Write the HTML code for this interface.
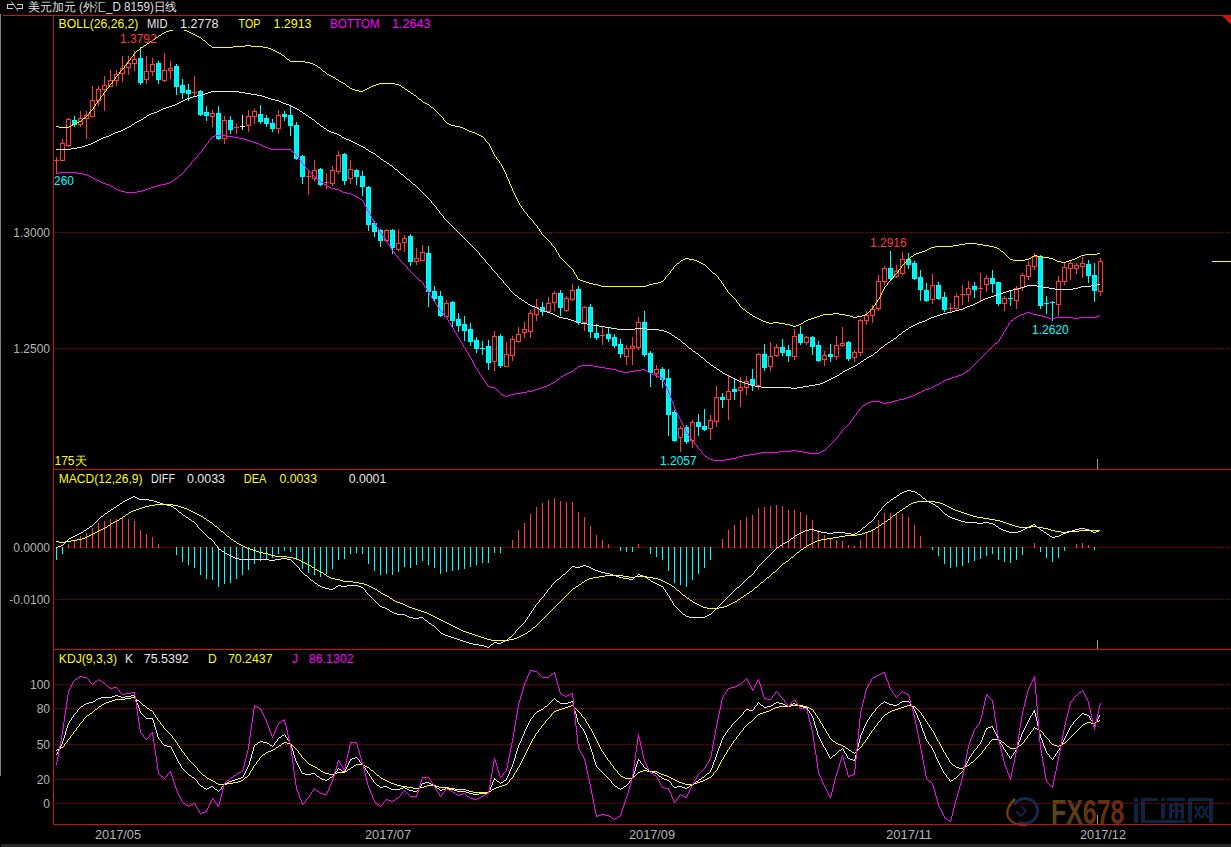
<!DOCTYPE html><html><head><meta charset="utf-8"><style>
html,body{margin:0;padding:0;background:#000;width:1231px;height:847px;overflow:hidden}
svg{display:block}
text{font-family:"Liberation Sans",sans-serif;font-size:12px}
</style></head><body>
<svg width="1231" height="847" viewBox="0 0 1231 847">
<rect width="1231" height="847" fill="#000"/>
<defs><linearGradient id="fxg" x1="0" y1="0" x2="1" y2="0"><stop offset="0" stop-color="#584616"/><stop offset="0.45" stop-color="#5e3816"/><stop offset="1" stop-color="#662a10"/></linearGradient><linearGradient id="crs" x1="0" y1="0" x2="0" y2="1"><stop offset="0" stop-color="#6a5010"/><stop offset="0.6" stop-color="#7a3010"/><stop offset="1" stop-color="#6a3818"/></linearGradient></defs>
<g>
<path d="M1014.2 804.75 A12.5 12.5 0 1 1 1018.75 821.8" fill="none" stroke="#132a50" stroke-width="3"/>
<path d="M1015 799 Q1005 808 1008 817 Q1013 826 1027 825" fill="none" stroke="url(#crs)" stroke-width="2.4"/>
<path d="M1021 806 L1026 811 L1021 816 L1016 811" fill="none" stroke="#132a50" stroke-width="1.6"/>
<text x="1051" y="823.5" style="font-size:34.5px;font-weight:bold" fill="url(#fxg)" textLength="73.5" lengthAdjust="spacingAndGlyphs">FX678</text>
<g fill="#0e2242" shape-rendering="crispEdges"><rect x="1134" y="798" width="4" height="4"/><rect x="1134" y="804" width="4" height="19"/><rect x="1141" y="798" width="17" height="3"/><rect x="1141" y="798" width="4" height="25"/><rect x="1141" y="820" width="44" height="3"/><rect x="1161" y="798" width="4" height="3"/><rect x="1161" y="804" width="4" height="15"/><rect x="1167" y="798" width="18" height="3"/><rect x="1169" y="804" width="15" height="2"/><rect x="1169" y="804" width="3" height="15"/><rect x="1181" y="804" width="3" height="15"/><rect x="1175" y="802" width="3" height="17"/><rect x="1169" y="810" width="15" height="2"/><rect x="1188" y="798" width="25" height="3"/><rect x="1188" y="798" width="4" height="25"/><rect x="1209" y="798" width="4" height="25"/></g>
<path d="M1195 806 L1201 818 M1201 806 L1195 818 M1202 806 L1208 818 M1208 806 L1202 818" stroke="#0e2242" stroke-width="2.2" fill="none"/>
</g>
<g stroke="#a00000" stroke-width="1" stroke-dasharray="1 1" shape-rendering="crispEdges">
<line x1="55" y1="232.5" x2="1231" y2="232.5"/>
<line x1="55" y1="348.5" x2="1231" y2="348.5"/>
<line x1="55" y1="547.5" x2="1231" y2="547.5"/>
<line x1="55" y1="599.5" x2="1231" y2="599.5"/>
<line x1="55" y1="684.5" x2="1231" y2="684.5"/>
<line x1="55" y1="708.5" x2="1231" y2="708.5"/>
<line x1="55" y1="744.5" x2="1231" y2="744.5"/>
<line x1="55" y1="779.5" x2="1231" y2="779.5"/>
<line x1="55" y1="803.5" x2="1231" y2="803.5"/>
</g>
<g fill="#c8140a" shape-rendering="crispEdges">
<rect x="3" y="15" width="1228" height="1"/>
<rect x="53" y="15" width="1" height="810"/>
<rect x="53" y="469" width="1178" height="1"/>
<rect x="53" y="649" width="1178" height="1"/>
<rect x="53" y="824" width="1178" height="1"/>
<path d="M1222 15 L1231 15 L1231 25 Z"/>
</g>
<rect x="0" y="14" width="1" height="762" fill="#808080" shape-rendering="crispEdges"/>
<rect x="1" y="844" width="1230" height="3" fill="#2a2a2a" shape-rendering="crispEdges"/>
<g fill="#a0a0a0" shape-rendering="crispEdges">
<rect x="1097" y="459" width="1" height="10"/>
<rect x="1097" y="640" width="1" height="9"/>
<rect x="1097" y="815" width="1" height="9"/>
</g>
<rect x="1212" y="261" width="19" height="1" fill="#ffff00" shape-rendering="crispEdges"/>
<g shape-rendering="crispEdges">
<rect x="56" y="547" width="1" height="13" fill="#00ffff"/>
<rect x="62" y="547" width="1" height="7" fill="#00ffff"/>
<rect x="68" y="544" width="1" height="4" fill="#ff3c3c"/>
<rect x="74" y="540" width="1" height="8" fill="#ff3c3c"/>
<rect x="80" y="536" width="1" height="12" fill="#ff3c3c"/>
<rect x="86" y="533" width="1" height="15" fill="#ff3c3c"/>
<rect x="92" y="528" width="1" height="20" fill="#ff3c3c"/>
<rect x="98" y="523" width="1" height="25" fill="#ff3c3c"/>
<rect x="104" y="521" width="1" height="27" fill="#ff3c3c"/>
<rect x="110" y="519" width="1" height="29" fill="#ff3c3c"/>
<rect x="116" y="519" width="1" height="29" fill="#ff3c3c"/>
<rect x="122" y="518" width="1" height="30" fill="#ff3c3c"/>
<rect x="128" y="519" width="1" height="29" fill="#ff3c3c"/>
<rect x="134" y="521" width="1" height="27" fill="#ff3c3c"/>
<rect x="140" y="530" width="1" height="18" fill="#ff3c3c"/>
<rect x="146" y="534" width="1" height="14" fill="#ff3c3c"/>
<rect x="152" y="537" width="1" height="11" fill="#ff3c3c"/>
<rect x="158" y="544" width="1" height="4" fill="#ff3c3c"/>
<rect x="176" y="547" width="1" height="8" fill="#00ffff"/>
<rect x="182" y="547" width="1" height="15" fill="#00ffff"/>
<rect x="188" y="547" width="1" height="18" fill="#00ffff"/>
<rect x="194" y="547" width="1" height="21" fill="#00ffff"/>
<rect x="200" y="547" width="1" height="28" fill="#00ffff"/>
<rect x="206" y="547" width="1" height="32" fill="#00ffff"/>
<rect x="212" y="547" width="1" height="33" fill="#00ffff"/>
<rect x="218" y="547" width="1" height="40" fill="#00ffff"/>
<rect x="224" y="547" width="1" height="37" fill="#00ffff"/>
<rect x="230" y="547" width="1" height="36" fill="#00ffff"/>
<rect x="236" y="547" width="1" height="32" fill="#00ffff"/>
<rect x="242" y="547" width="1" height="28" fill="#00ffff"/>
<rect x="248" y="547" width="1" height="23" fill="#00ffff"/>
<rect x="254" y="547" width="1" height="17" fill="#00ffff"/>
<rect x="260" y="547" width="1" height="14" fill="#00ffff"/>
<rect x="266" y="547" width="1" height="12" fill="#00ffff"/>
<rect x="272" y="547" width="1" height="11" fill="#00ffff"/>
<rect x="278" y="547" width="1" height="7" fill="#00ffff"/>
<rect x="284" y="547" width="1" height="4" fill="#00ffff"/>
<rect x="290" y="547" width="1" height="5" fill="#00ffff"/>
<rect x="296" y="547" width="1" height="13" fill="#00ffff"/>
<rect x="302" y="547" width="1" height="22" fill="#00ffff"/>
<rect x="308" y="547" width="1" height="26" fill="#00ffff"/>
<rect x="314" y="547" width="1" height="28" fill="#00ffff"/>
<rect x="320" y="547" width="1" height="30" fill="#00ffff"/>
<rect x="326" y="547" width="1" height="27" fill="#00ffff"/>
<rect x="332" y="547" width="1" height="22" fill="#00ffff"/>
<rect x="338" y="547" width="1" height="13" fill="#00ffff"/>
<rect x="344" y="547" width="1" height="12" fill="#00ffff"/>
<rect x="350" y="547" width="1" height="7" fill="#00ffff"/>
<rect x="356" y="547" width="1" height="6" fill="#00ffff"/>
<rect x="362" y="547" width="1" height="7" fill="#00ffff"/>
<rect x="368" y="547" width="1" height="17" fill="#00ffff"/>
<rect x="374" y="547" width="1" height="24" fill="#00ffff"/>
<rect x="380" y="547" width="1" height="28" fill="#00ffff"/>
<rect x="386" y="547" width="1" height="27" fill="#00ffff"/>
<rect x="392" y="547" width="1" height="28" fill="#00ffff"/>
<rect x="398" y="547" width="1" height="25" fill="#00ffff"/>
<rect x="404" y="547" width="1" height="20" fill="#00ffff"/>
<rect x="410" y="547" width="1" height="21" fill="#00ffff"/>
<rect x="416" y="547" width="1" height="18" fill="#00ffff"/>
<rect x="422" y="547" width="1" height="14" fill="#00ffff"/>
<rect x="428" y="547" width="1" height="18" fill="#00ffff"/>
<rect x="434" y="547" width="1" height="21" fill="#00ffff"/>
<rect x="440" y="547" width="1" height="27" fill="#00ffff"/>
<rect x="446" y="547" width="1" height="25" fill="#00ffff"/>
<rect x="452" y="547" width="1" height="24" fill="#00ffff"/>
<rect x="458" y="547" width="1" height="23" fill="#00ffff"/>
<rect x="464" y="547" width="1" height="22" fill="#00ffff"/>
<rect x="470" y="547" width="1" height="20" fill="#00ffff"/>
<rect x="476" y="547" width="1" height="18" fill="#00ffff"/>
<rect x="482" y="547" width="1" height="16" fill="#00ffff"/>
<rect x="488" y="547" width="1" height="16" fill="#00ffff"/>
<rect x="494" y="547" width="1" height="6" fill="#00ffff"/>
<rect x="500" y="547" width="1" height="6" fill="#00ffff"/>
<rect x="512" y="540" width="1" height="8" fill="#ff3c3c"/>
<rect x="518" y="530" width="1" height="18" fill="#ff3c3c"/>
<rect x="524" y="523" width="1" height="25" fill="#ff3c3c"/>
<rect x="530" y="514" width="1" height="34" fill="#ff3c3c"/>
<rect x="536" y="507" width="1" height="41" fill="#ff3c3c"/>
<rect x="542" y="503" width="1" height="45" fill="#ff3c3c"/>
<rect x="548" y="500" width="1" height="48" fill="#ff3c3c"/>
<rect x="554" y="498" width="1" height="50" fill="#ff3c3c"/>
<rect x="560" y="501" width="1" height="47" fill="#ff3c3c"/>
<rect x="566" y="502" width="1" height="46" fill="#ff3c3c"/>
<rect x="572" y="502" width="1" height="46" fill="#ff3c3c"/>
<rect x="578" y="512" width="1" height="36" fill="#ff3c3c"/>
<rect x="584" y="517" width="1" height="31" fill="#ff3c3c"/>
<rect x="590" y="526" width="1" height="22" fill="#ff3c3c"/>
<rect x="596" y="535" width="1" height="13" fill="#ff3c3c"/>
<rect x="602" y="540" width="1" height="8" fill="#ff3c3c"/>
<rect x="608" y="544" width="1" height="4" fill="#ff3c3c"/>
<rect x="620" y="547" width="1" height="4" fill="#00ffff"/>
<rect x="626" y="547" width="1" height="5" fill="#00ffff"/>
<rect x="632" y="547" width="1" height="5" fill="#00ffff"/>
<rect x="638" y="544" width="1" height="4" fill="#ff3c3c"/>
<rect x="650" y="547" width="1" height="7" fill="#00ffff"/>
<rect x="656" y="547" width="1" height="10" fill="#00ffff"/>
<rect x="662" y="547" width="1" height="13" fill="#00ffff"/>
<rect x="668" y="547" width="1" height="24" fill="#00ffff"/>
<rect x="674" y="547" width="1" height="36" fill="#00ffff"/>
<rect x="680" y="547" width="1" height="38" fill="#00ffff"/>
<rect x="686" y="547" width="1" height="40" fill="#00ffff"/>
<rect x="692" y="547" width="1" height="33" fill="#00ffff"/>
<rect x="698" y="547" width="1" height="27" fill="#00ffff"/>
<rect x="704" y="547" width="1" height="21" fill="#00ffff"/>
<rect x="710" y="547" width="1" height="13" fill="#00ffff"/>
<rect x="722" y="539" width="1" height="9" fill="#ff3c3c"/>
<rect x="728" y="530" width="1" height="18" fill="#ff3c3c"/>
<rect x="734" y="525" width="1" height="23" fill="#ff3c3c"/>
<rect x="740" y="520" width="1" height="28" fill="#ff3c3c"/>
<rect x="746" y="517" width="1" height="31" fill="#ff3c3c"/>
<rect x="752" y="515" width="1" height="33" fill="#ff3c3c"/>
<rect x="758" y="508" width="1" height="40" fill="#ff3c3c"/>
<rect x="764" y="507" width="1" height="41" fill="#ff3c3c"/>
<rect x="770" y="506" width="1" height="42" fill="#ff3c3c"/>
<rect x="776" y="505" width="1" height="43" fill="#ff3c3c"/>
<rect x="782" y="506" width="1" height="42" fill="#ff3c3c"/>
<rect x="788" y="510" width="1" height="38" fill="#ff3c3c"/>
<rect x="794" y="510" width="1" height="38" fill="#ff3c3c"/>
<rect x="800" y="512" width="1" height="36" fill="#ff3c3c"/>
<rect x="806" y="515" width="1" height="33" fill="#ff3c3c"/>
<rect x="812" y="520" width="1" height="28" fill="#ff3c3c"/>
<rect x="818" y="530" width="1" height="18" fill="#ff3c3c"/>
<rect x="824" y="535" width="1" height="13" fill="#ff3c3c"/>
<rect x="830" y="539" width="1" height="9" fill="#ff3c3c"/>
<rect x="836" y="540" width="1" height="8" fill="#ff3c3c"/>
<rect x="842" y="541" width="1" height="7" fill="#ff3c3c"/>
<rect x="848" y="545" width="1" height="3" fill="#ff3c3c"/>
<rect x="854" y="546" width="1" height="2" fill="#ff3c3c"/>
<rect x="860" y="540" width="1" height="8" fill="#ff3c3c"/>
<rect x="866" y="533" width="1" height="15" fill="#ff3c3c"/>
<rect x="872" y="529" width="1" height="19" fill="#ff3c3c"/>
<rect x="878" y="520" width="1" height="28" fill="#ff3c3c"/>
<rect x="884" y="513" width="1" height="35" fill="#ff3c3c"/>
<rect x="890" y="513" width="1" height="35" fill="#ff3c3c"/>
<rect x="896" y="514" width="1" height="34" fill="#ff3c3c"/>
<rect x="902" y="514" width="1" height="34" fill="#ff3c3c"/>
<rect x="908" y="517" width="1" height="31" fill="#ff3c3c"/>
<rect x="914" y="525" width="1" height="23" fill="#ff3c3c"/>
<rect x="920" y="536" width="1" height="12" fill="#ff3c3c"/>
<rect x="932" y="547" width="1" height="3" fill="#00ffff"/>
<rect x="938" y="547" width="1" height="9" fill="#00ffff"/>
<rect x="944" y="547" width="1" height="17" fill="#00ffff"/>
<rect x="950" y="547" width="1" height="21" fill="#00ffff"/>
<rect x="956" y="547" width="1" height="20" fill="#00ffff"/>
<rect x="962" y="547" width="1" height="19" fill="#00ffff"/>
<rect x="968" y="547" width="1" height="16" fill="#00ffff"/>
<rect x="974" y="547" width="1" height="14" fill="#00ffff"/>
<rect x="980" y="547" width="1" height="12" fill="#00ffff"/>
<rect x="986" y="547" width="1" height="9" fill="#00ffff"/>
<rect x="992" y="547" width="1" height="7" fill="#00ffff"/>
<rect x="998" y="547" width="1" height="13" fill="#00ffff"/>
<rect x="1004" y="547" width="1" height="15" fill="#00ffff"/>
<rect x="1010" y="547" width="1" height="16" fill="#00ffff"/>
<rect x="1016" y="547" width="1" height="13" fill="#00ffff"/>
<rect x="1022" y="547" width="1" height="8" fill="#00ffff"/>
<rect x="1034" y="543" width="1" height="5" fill="#ff3c3c"/>
<rect x="1040" y="547" width="1" height="5" fill="#00ffff"/>
<rect x="1046" y="547" width="1" height="11" fill="#00ffff"/>
<rect x="1052" y="547" width="1" height="15" fill="#00ffff"/>
<rect x="1058" y="547" width="1" height="11" fill="#00ffff"/>
<rect x="1064" y="547" width="1" height="4" fill="#00ffff"/>
<rect x="1076" y="544" width="1" height="4" fill="#ff3c3c"/>
<rect x="1082" y="543" width="1" height="5" fill="#ff3c3c"/>
<rect x="1088" y="545" width="1" height="3" fill="#ff3c3c"/>
<rect x="1094" y="547" width="1" height="3" fill="#00ffff"/>
</g>
<g shape-rendering="crispEdges">
<rect x="56" y="157" width="1" height="3" fill="#ff3c3c"/>
<rect x="56" y="161" width="1" height="12" fill="#ff3c3c"/>
<rect x="54" y="160" width="5" height="1" fill="#ff3c3c"/>
<rect x="62" y="139" width="1" height="4" fill="#ff3c3c"/>
<rect x="60" y="143" width="5" height="1" fill="#ff3c3c"/>
<rect x="60" y="160" width="5" height="1" fill="#ff3c3c"/>
<rect x="60" y="143" width="1" height="18" fill="#ff3c3c"/>
<rect x="64" y="143" width="1" height="18" fill="#ff3c3c"/>
<rect x="68" y="118" width="1" height="1" fill="#ff3c3c"/>
<rect x="68" y="146" width="1" height="1" fill="#ff3c3c"/>
<rect x="66" y="119" width="5" height="1" fill="#ff3c3c"/>
<rect x="66" y="145" width="5" height="1" fill="#ff3c3c"/>
<rect x="66" y="119" width="1" height="27" fill="#ff3c3c"/>
<rect x="70" y="119" width="1" height="27" fill="#ff3c3c"/>
<rect x="74" y="116" width="1" height="11" fill="#00ffff"/>
<rect x="72" y="120" width="5" height="5" fill="#00ffff"/>
<rect x="73" y="121" width="3" height="3" fill="#00f0f0"/>
<rect x="80" y="111" width="1" height="7" fill="#ff3c3c"/>
<rect x="80" y="125" width="1" height="2" fill="#ff3c3c"/>
<rect x="78" y="118" width="5" height="1" fill="#ff3c3c"/>
<rect x="78" y="124" width="5" height="1" fill="#ff3c3c"/>
<rect x="78" y="118" width="1" height="7" fill="#ff3c3c"/>
<rect x="82" y="118" width="1" height="7" fill="#ff3c3c"/>
<rect x="86" y="111" width="1" height="4" fill="#ff3c3c"/>
<rect x="86" y="119" width="1" height="20" fill="#ff3c3c"/>
<rect x="84" y="115" width="5" height="1" fill="#ff3c3c"/>
<rect x="84" y="118" width="5" height="1" fill="#ff3c3c"/>
<rect x="84" y="115" width="1" height="4" fill="#ff3c3c"/>
<rect x="88" y="115" width="1" height="4" fill="#ff3c3c"/>
<rect x="92" y="86" width="1" height="14" fill="#ff3c3c"/>
<rect x="90" y="100" width="5" height="1" fill="#ff3c3c"/>
<rect x="90" y="116" width="5" height="1" fill="#ff3c3c"/>
<rect x="90" y="100" width="1" height="17" fill="#ff3c3c"/>
<rect x="94" y="100" width="1" height="17" fill="#ff3c3c"/>
<rect x="98" y="86" width="1" height="3" fill="#ff3c3c"/>
<rect x="98" y="101" width="1" height="5" fill="#ff3c3c"/>
<rect x="96" y="89" width="5" height="1" fill="#ff3c3c"/>
<rect x="96" y="100" width="5" height="1" fill="#ff3c3c"/>
<rect x="96" y="89" width="1" height="12" fill="#ff3c3c"/>
<rect x="100" y="89" width="1" height="12" fill="#ff3c3c"/>
<rect x="104" y="76" width="1" height="9" fill="#ff3c3c"/>
<rect x="104" y="90" width="1" height="21" fill="#ff3c3c"/>
<rect x="102" y="85" width="5" height="1" fill="#ff3c3c"/>
<rect x="102" y="89" width="5" height="1" fill="#ff3c3c"/>
<rect x="102" y="85" width="1" height="5" fill="#ff3c3c"/>
<rect x="106" y="85" width="1" height="5" fill="#ff3c3c"/>
<rect x="110" y="70" width="1" height="10" fill="#ff3c3c"/>
<rect x="108" y="80" width="5" height="1" fill="#ff3c3c"/>
<rect x="108" y="86" width="5" height="1" fill="#ff3c3c"/>
<rect x="108" y="80" width="1" height="7" fill="#ff3c3c"/>
<rect x="112" y="80" width="1" height="7" fill="#ff3c3c"/>
<rect x="116" y="70" width="1" height="4" fill="#ff3c3c"/>
<rect x="116" y="81" width="1" height="5" fill="#ff3c3c"/>
<rect x="114" y="74" width="5" height="1" fill="#ff3c3c"/>
<rect x="114" y="80" width="5" height="1" fill="#ff3c3c"/>
<rect x="114" y="74" width="1" height="7" fill="#ff3c3c"/>
<rect x="118" y="74" width="1" height="7" fill="#ff3c3c"/>
<rect x="122" y="56" width="1" height="12" fill="#ff3c3c"/>
<rect x="122" y="74" width="1" height="8" fill="#ff3c3c"/>
<rect x="120" y="68" width="5" height="1" fill="#ff3c3c"/>
<rect x="120" y="73" width="5" height="1" fill="#ff3c3c"/>
<rect x="120" y="68" width="1" height="6" fill="#ff3c3c"/>
<rect x="124" y="68" width="1" height="6" fill="#ff3c3c"/>
<rect x="128" y="56" width="1" height="7" fill="#ff3c3c"/>
<rect x="128" y="68" width="1" height="7" fill="#ff3c3c"/>
<rect x="126" y="63" width="5" height="1" fill="#ff3c3c"/>
<rect x="126" y="67" width="5" height="1" fill="#ff3c3c"/>
<rect x="126" y="63" width="1" height="5" fill="#ff3c3c"/>
<rect x="130" y="63" width="1" height="5" fill="#ff3c3c"/>
<rect x="134" y="51" width="1" height="8" fill="#ff3c3c"/>
<rect x="134" y="64" width="1" height="7" fill="#ff3c3c"/>
<rect x="132" y="59" width="5" height="1" fill="#ff3c3c"/>
<rect x="132" y="63" width="5" height="1" fill="#ff3c3c"/>
<rect x="132" y="59" width="1" height="5" fill="#ff3c3c"/>
<rect x="136" y="59" width="1" height="5" fill="#ff3c3c"/>
<rect x="140" y="47" width="1" height="38" fill="#00ffff"/>
<rect x="138" y="58" width="5" height="25" fill="#00ffff"/>
<rect x="139" y="59" width="3" height="23" fill="#00f0f0"/>
<rect x="146" y="56" width="1" height="15" fill="#ff3c3c"/>
<rect x="146" y="80" width="1" height="4" fill="#ff3c3c"/>
<rect x="144" y="71" width="5" height="1" fill="#ff3c3c"/>
<rect x="144" y="79" width="5" height="1" fill="#ff3c3c"/>
<rect x="144" y="71" width="1" height="9" fill="#ff3c3c"/>
<rect x="148" y="71" width="1" height="9" fill="#ff3c3c"/>
<rect x="152" y="58" width="1" height="6" fill="#ff3c3c"/>
<rect x="152" y="72" width="1" height="4" fill="#ff3c3c"/>
<rect x="150" y="64" width="5" height="1" fill="#ff3c3c"/>
<rect x="150" y="71" width="5" height="1" fill="#ff3c3c"/>
<rect x="150" y="64" width="1" height="8" fill="#ff3c3c"/>
<rect x="154" y="64" width="1" height="8" fill="#ff3c3c"/>
<rect x="158" y="61" width="1" height="23" fill="#00ffff"/>
<rect x="156" y="63" width="5" height="17" fill="#00ffff"/>
<rect x="157" y="64" width="3" height="15" fill="#00f0f0"/>
<rect x="164" y="53" width="1" height="17" fill="#ff3c3c"/>
<rect x="164" y="81" width="1" height="1" fill="#ff3c3c"/>
<rect x="162" y="70" width="5" height="1" fill="#ff3c3c"/>
<rect x="162" y="80" width="5" height="1" fill="#ff3c3c"/>
<rect x="162" y="70" width="1" height="11" fill="#ff3c3c"/>
<rect x="166" y="70" width="1" height="11" fill="#ff3c3c"/>
<rect x="170" y="61" width="1" height="7" fill="#ff3c3c"/>
<rect x="170" y="71" width="1" height="8" fill="#ff3c3c"/>
<rect x="168" y="68" width="5" height="1" fill="#ff3c3c"/>
<rect x="168" y="70" width="5" height="1" fill="#ff3c3c"/>
<rect x="168" y="68" width="1" height="3" fill="#ff3c3c"/>
<rect x="172" y="68" width="1" height="3" fill="#ff3c3c"/>
<rect x="176" y="64" width="1" height="31" fill="#00ffff"/>
<rect x="174" y="66" width="5" height="21" fill="#00ffff"/>
<rect x="175" y="67" width="3" height="19" fill="#00f0f0"/>
<rect x="182" y="79" width="1" height="20" fill="#00ffff"/>
<rect x="180" y="85" width="5" height="8" fill="#00ffff"/>
<rect x="181" y="86" width="3" height="6" fill="#00f0f0"/>
<rect x="188" y="84" width="1" height="17" fill="#00ffff"/>
<rect x="186" y="90" width="5" height="4" fill="#00ffff"/>
<rect x="187" y="91" width="3" height="2" fill="#00f0f0"/>
<rect x="194" y="76" width="1" height="16" fill="#ff3c3c"/>
<rect x="194" y="93" width="1" height="4" fill="#ff3c3c"/>
<rect x="192" y="92" width="5" height="1" fill="#ff3c3c"/>
<rect x="200" y="90" width="1" height="26" fill="#00ffff"/>
<rect x="198" y="91" width="5" height="24" fill="#00ffff"/>
<rect x="199" y="92" width="3" height="22" fill="#00f0f0"/>
<rect x="206" y="106" width="1" height="15" fill="#00ffff"/>
<rect x="204" y="112" width="5" height="4" fill="#00ffff"/>
<rect x="205" y="113" width="3" height="2" fill="#00f0f0"/>
<rect x="212" y="110" width="1" height="3" fill="#ff3c3c"/>
<rect x="212" y="117" width="1" height="10" fill="#ff3c3c"/>
<rect x="210" y="113" width="5" height="1" fill="#ff3c3c"/>
<rect x="210" y="116" width="5" height="1" fill="#ff3c3c"/>
<rect x="210" y="113" width="1" height="4" fill="#ff3c3c"/>
<rect x="214" y="113" width="1" height="4" fill="#ff3c3c"/>
<rect x="218" y="106" width="1" height="34" fill="#00ffff"/>
<rect x="216" y="113" width="5" height="26" fill="#00ffff"/>
<rect x="217" y="114" width="3" height="24" fill="#00f0f0"/>
<rect x="224" y="116" width="1" height="4" fill="#ff3c3c"/>
<rect x="224" y="139" width="1" height="5" fill="#ff3c3c"/>
<rect x="222" y="120" width="5" height="1" fill="#ff3c3c"/>
<rect x="222" y="138" width="5" height="1" fill="#ff3c3c"/>
<rect x="222" y="120" width="1" height="19" fill="#ff3c3c"/>
<rect x="226" y="120" width="1" height="19" fill="#ff3c3c"/>
<rect x="230" y="116" width="1" height="18" fill="#00ffff"/>
<rect x="228" y="120" width="5" height="10" fill="#00ffff"/>
<rect x="229" y="121" width="3" height="8" fill="#00f0f0"/>
<rect x="236" y="123" width="1" height="4" fill="#ff3c3c"/>
<rect x="236" y="128" width="1" height="6" fill="#ff3c3c"/>
<rect x="234" y="127" width="5" height="1" fill="#ff3c3c"/>
<rect x="242" y="115" width="1" height="15" fill="#e8e8e8"/>
<rect x="240" y="126" width="5" height="1" fill="#e8e8e8"/>
<rect x="248" y="110" width="1" height="6" fill="#ff3c3c"/>
<rect x="248" y="126" width="1" height="6" fill="#ff3c3c"/>
<rect x="246" y="116" width="5" height="1" fill="#ff3c3c"/>
<rect x="246" y="125" width="5" height="1" fill="#ff3c3c"/>
<rect x="246" y="116" width="1" height="10" fill="#ff3c3c"/>
<rect x="250" y="116" width="1" height="10" fill="#ff3c3c"/>
<rect x="254" y="109" width="1" height="2" fill="#ff3c3c"/>
<rect x="254" y="117" width="1" height="7" fill="#ff3c3c"/>
<rect x="252" y="111" width="5" height="1" fill="#ff3c3c"/>
<rect x="252" y="116" width="5" height="1" fill="#ff3c3c"/>
<rect x="252" y="111" width="1" height="6" fill="#ff3c3c"/>
<rect x="256" y="111" width="1" height="6" fill="#ff3c3c"/>
<rect x="260" y="105" width="1" height="19" fill="#00ffff"/>
<rect x="258" y="114" width="5" height="8" fill="#00ffff"/>
<rect x="259" y="115" width="3" height="6" fill="#00f0f0"/>
<rect x="266" y="115" width="1" height="12" fill="#00ffff"/>
<rect x="264" y="118" width="5" height="6" fill="#00ffff"/>
<rect x="265" y="119" width="3" height="4" fill="#00f0f0"/>
<rect x="272" y="119" width="1" height="13" fill="#00ffff"/>
<rect x="270" y="123" width="5" height="6" fill="#00ffff"/>
<rect x="271" y="124" width="3" height="4" fill="#00f0f0"/>
<rect x="278" y="110" width="1" height="5" fill="#ff3c3c"/>
<rect x="278" y="129" width="1" height="5" fill="#ff3c3c"/>
<rect x="276" y="115" width="5" height="1" fill="#ff3c3c"/>
<rect x="276" y="128" width="5" height="1" fill="#ff3c3c"/>
<rect x="276" y="115" width="1" height="14" fill="#ff3c3c"/>
<rect x="280" y="115" width="1" height="14" fill="#ff3c3c"/>
<rect x="284" y="111" width="1" height="10" fill="#00ffff"/>
<rect x="282" y="114" width="5" height="3" fill="#00ffff"/>
<rect x="283" y="115" width="3" height="1" fill="#00f0f0"/>
<rect x="290" y="105" width="1" height="31" fill="#00ffff"/>
<rect x="288" y="115" width="5" height="11" fill="#00ffff"/>
<rect x="289" y="116" width="3" height="9" fill="#00f0f0"/>
<rect x="296" y="122" width="1" height="38" fill="#00ffff"/>
<rect x="294" y="125" width="5" height="34" fill="#00ffff"/>
<rect x="295" y="126" width="3" height="32" fill="#00f0f0"/>
<rect x="302" y="155" width="1" height="29" fill="#00ffff"/>
<rect x="300" y="156" width="5" height="21" fill="#00ffff"/>
<rect x="301" y="157" width="3" height="19" fill="#00f0f0"/>
<rect x="308" y="170" width="1" height="6" fill="#ff3c3c"/>
<rect x="308" y="177" width="1" height="18" fill="#ff3c3c"/>
<rect x="306" y="176" width="5" height="1" fill="#ff3c3c"/>
<rect x="314" y="160" width="1" height="10" fill="#ff3c3c"/>
<rect x="314" y="179" width="1" height="2" fill="#ff3c3c"/>
<rect x="312" y="170" width="5" height="1" fill="#ff3c3c"/>
<rect x="312" y="178" width="5" height="1" fill="#ff3c3c"/>
<rect x="312" y="170" width="1" height="9" fill="#ff3c3c"/>
<rect x="316" y="170" width="1" height="9" fill="#ff3c3c"/>
<rect x="320" y="168" width="1" height="18" fill="#00ffff"/>
<rect x="318" y="169" width="5" height="16" fill="#00ffff"/>
<rect x="319" y="170" width="3" height="14" fill="#00f0f0"/>
<rect x="326" y="173" width="1" height="9" fill="#ff3c3c"/>
<rect x="326" y="183" width="1" height="6" fill="#ff3c3c"/>
<rect x="324" y="182" width="5" height="1" fill="#ff3c3c"/>
<rect x="332" y="166" width="1" height="4" fill="#ff3c3c"/>
<rect x="332" y="184" width="1" height="2" fill="#ff3c3c"/>
<rect x="330" y="170" width="5" height="1" fill="#ff3c3c"/>
<rect x="330" y="183" width="5" height="1" fill="#ff3c3c"/>
<rect x="330" y="170" width="1" height="14" fill="#ff3c3c"/>
<rect x="334" y="170" width="1" height="14" fill="#ff3c3c"/>
<rect x="338" y="151" width="1" height="4" fill="#ff3c3c"/>
<rect x="338" y="172" width="1" height="2" fill="#ff3c3c"/>
<rect x="336" y="155" width="5" height="1" fill="#ff3c3c"/>
<rect x="336" y="171" width="5" height="1" fill="#ff3c3c"/>
<rect x="336" y="155" width="1" height="17" fill="#ff3c3c"/>
<rect x="340" y="155" width="1" height="17" fill="#ff3c3c"/>
<rect x="344" y="153" width="1" height="32" fill="#00ffff"/>
<rect x="342" y="154" width="5" height="27" fill="#00ffff"/>
<rect x="343" y="155" width="3" height="25" fill="#00f0f0"/>
<rect x="350" y="160" width="1" height="9" fill="#ff3c3c"/>
<rect x="350" y="179" width="1" height="5" fill="#ff3c3c"/>
<rect x="348" y="169" width="5" height="1" fill="#ff3c3c"/>
<rect x="348" y="178" width="5" height="1" fill="#ff3c3c"/>
<rect x="348" y="169" width="1" height="10" fill="#ff3c3c"/>
<rect x="352" y="169" width="1" height="10" fill="#ff3c3c"/>
<rect x="356" y="169" width="1" height="16" fill="#00ffff"/>
<rect x="354" y="170" width="5" height="7" fill="#00ffff"/>
<rect x="355" y="171" width="3" height="5" fill="#00f0f0"/>
<rect x="362" y="171" width="1" height="25" fill="#00ffff"/>
<rect x="360" y="176" width="5" height="11" fill="#00ffff"/>
<rect x="361" y="177" width="3" height="9" fill="#00f0f0"/>
<rect x="368" y="186" width="1" height="45" fill="#00ffff"/>
<rect x="366" y="187" width="5" height="38" fill="#00ffff"/>
<rect x="367" y="188" width="3" height="36" fill="#00f0f0"/>
<rect x="374" y="221" width="1" height="16" fill="#00ffff"/>
<rect x="372" y="223" width="5" height="9" fill="#00ffff"/>
<rect x="373" y="224" width="3" height="7" fill="#00f0f0"/>
<rect x="380" y="229" width="1" height="18" fill="#00ffff"/>
<rect x="378" y="230" width="5" height="11" fill="#00ffff"/>
<rect x="379" y="231" width="3" height="9" fill="#00f0f0"/>
<rect x="386" y="229" width="1" height="1" fill="#ff3c3c"/>
<rect x="386" y="241" width="1" height="1" fill="#ff3c3c"/>
<rect x="384" y="230" width="5" height="1" fill="#ff3c3c"/>
<rect x="384" y="240" width="5" height="1" fill="#ff3c3c"/>
<rect x="384" y="230" width="1" height="11" fill="#ff3c3c"/>
<rect x="388" y="230" width="1" height="11" fill="#ff3c3c"/>
<rect x="392" y="229" width="1" height="25" fill="#00ffff"/>
<rect x="390" y="230" width="5" height="18" fill="#00ffff"/>
<rect x="391" y="231" width="3" height="16" fill="#00f0f0"/>
<rect x="398" y="229" width="1" height="14" fill="#ff3c3c"/>
<rect x="398" y="250" width="1" height="1" fill="#ff3c3c"/>
<rect x="396" y="243" width="5" height="1" fill="#ff3c3c"/>
<rect x="396" y="249" width="5" height="1" fill="#ff3c3c"/>
<rect x="396" y="243" width="1" height="7" fill="#ff3c3c"/>
<rect x="400" y="243" width="1" height="7" fill="#ff3c3c"/>
<rect x="404" y="235" width="1" height="3" fill="#ff3c3c"/>
<rect x="404" y="243" width="1" height="9" fill="#ff3c3c"/>
<rect x="402" y="238" width="5" height="1" fill="#ff3c3c"/>
<rect x="402" y="242" width="5" height="1" fill="#ff3c3c"/>
<rect x="402" y="238" width="1" height="5" fill="#ff3c3c"/>
<rect x="406" y="238" width="1" height="5" fill="#ff3c3c"/>
<rect x="410" y="234" width="1" height="32" fill="#00ffff"/>
<rect x="408" y="236" width="5" height="26" fill="#00ffff"/>
<rect x="409" y="237" width="3" height="24" fill="#00f0f0"/>
<rect x="416" y="248" width="1" height="10" fill="#ff3c3c"/>
<rect x="416" y="262" width="1" height="3" fill="#ff3c3c"/>
<rect x="414" y="258" width="5" height="1" fill="#ff3c3c"/>
<rect x="414" y="261" width="5" height="1" fill="#ff3c3c"/>
<rect x="414" y="258" width="1" height="4" fill="#ff3c3c"/>
<rect x="418" y="258" width="1" height="4" fill="#ff3c3c"/>
<rect x="422" y="245" width="1" height="7" fill="#ff3c3c"/>
<rect x="420" y="252" width="5" height="1" fill="#ff3c3c"/>
<rect x="420" y="260" width="5" height="1" fill="#ff3c3c"/>
<rect x="420" y="252" width="1" height="9" fill="#ff3c3c"/>
<rect x="424" y="252" width="1" height="9" fill="#ff3c3c"/>
<rect x="428" y="246" width="1" height="61" fill="#00ffff"/>
<rect x="426" y="253" width="5" height="39" fill="#00ffff"/>
<rect x="427" y="254" width="3" height="37" fill="#00f0f0"/>
<rect x="434" y="286" width="1" height="15" fill="#00ffff"/>
<rect x="432" y="291" width="5" height="8" fill="#00ffff"/>
<rect x="433" y="292" width="3" height="6" fill="#00f0f0"/>
<rect x="440" y="291" width="1" height="26" fill="#00ffff"/>
<rect x="438" y="296" width="5" height="20" fill="#00ffff"/>
<rect x="439" y="297" width="3" height="18" fill="#00f0f0"/>
<rect x="446" y="300" width="1" height="3" fill="#ff3c3c"/>
<rect x="444" y="303" width="5" height="1" fill="#ff3c3c"/>
<rect x="444" y="316" width="5" height="1" fill="#ff3c3c"/>
<rect x="444" y="303" width="1" height="14" fill="#ff3c3c"/>
<rect x="448" y="303" width="1" height="14" fill="#ff3c3c"/>
<rect x="452" y="301" width="1" height="27" fill="#00ffff"/>
<rect x="450" y="302" width="5" height="19" fill="#00ffff"/>
<rect x="451" y="303" width="3" height="17" fill="#00f0f0"/>
<rect x="458" y="313" width="1" height="19" fill="#00ffff"/>
<rect x="456" y="319" width="5" height="7" fill="#00ffff"/>
<rect x="457" y="320" width="3" height="5" fill="#00f0f0"/>
<rect x="464" y="316" width="1" height="25" fill="#00ffff"/>
<rect x="462" y="324" width="5" height="7" fill="#00ffff"/>
<rect x="463" y="325" width="3" height="5" fill="#00f0f0"/>
<rect x="470" y="323" width="1" height="23" fill="#00ffff"/>
<rect x="468" y="329" width="5" height="13" fill="#00ffff"/>
<rect x="469" y="330" width="3" height="11" fill="#00f0f0"/>
<rect x="476" y="337" width="1" height="16" fill="#00ffff"/>
<rect x="474" y="340" width="5" height="9" fill="#00ffff"/>
<rect x="475" y="341" width="3" height="7" fill="#00f0f0"/>
<rect x="482" y="341" width="1" height="14" fill="#00ffff"/>
<rect x="480" y="348" width="5" height="1" fill="#00ffff"/>
<rect x="488" y="340" width="1" height="30" fill="#00ffff"/>
<rect x="486" y="346" width="5" height="17" fill="#00ffff"/>
<rect x="487" y="347" width="3" height="15" fill="#00f0f0"/>
<rect x="494" y="331" width="1" height="5" fill="#ff3c3c"/>
<rect x="494" y="362" width="1" height="9" fill="#ff3c3c"/>
<rect x="492" y="336" width="5" height="1" fill="#ff3c3c"/>
<rect x="492" y="361" width="5" height="1" fill="#ff3c3c"/>
<rect x="492" y="336" width="1" height="26" fill="#ff3c3c"/>
<rect x="496" y="336" width="1" height="26" fill="#ff3c3c"/>
<rect x="500" y="334" width="1" height="34" fill="#00ffff"/>
<rect x="498" y="336" width="5" height="30" fill="#00ffff"/>
<rect x="499" y="337" width="3" height="28" fill="#00f0f0"/>
<rect x="506" y="342" width="1" height="12" fill="#ff3c3c"/>
<rect x="504" y="354" width="5" height="1" fill="#ff3c3c"/>
<rect x="504" y="366" width="5" height="1" fill="#ff3c3c"/>
<rect x="504" y="354" width="1" height="13" fill="#ff3c3c"/>
<rect x="508" y="354" width="1" height="13" fill="#ff3c3c"/>
<rect x="512" y="336" width="1" height="3" fill="#ff3c3c"/>
<rect x="512" y="356" width="1" height="5" fill="#ff3c3c"/>
<rect x="510" y="339" width="5" height="1" fill="#ff3c3c"/>
<rect x="510" y="355" width="5" height="1" fill="#ff3c3c"/>
<rect x="510" y="339" width="1" height="17" fill="#ff3c3c"/>
<rect x="514" y="339" width="1" height="17" fill="#ff3c3c"/>
<rect x="518" y="327" width="1" height="7" fill="#ff3c3c"/>
<rect x="518" y="342" width="1" height="1" fill="#ff3c3c"/>
<rect x="516" y="334" width="5" height="1" fill="#ff3c3c"/>
<rect x="516" y="341" width="5" height="1" fill="#ff3c3c"/>
<rect x="516" y="334" width="1" height="8" fill="#ff3c3c"/>
<rect x="520" y="334" width="1" height="8" fill="#ff3c3c"/>
<rect x="524" y="322" width="1" height="7" fill="#ff3c3c"/>
<rect x="524" y="333" width="1" height="5" fill="#ff3c3c"/>
<rect x="522" y="329" width="5" height="1" fill="#ff3c3c"/>
<rect x="522" y="332" width="5" height="1" fill="#ff3c3c"/>
<rect x="522" y="329" width="1" height="4" fill="#ff3c3c"/>
<rect x="526" y="329" width="1" height="4" fill="#ff3c3c"/>
<rect x="530" y="310" width="1" height="3" fill="#ff3c3c"/>
<rect x="530" y="332" width="1" height="6" fill="#ff3c3c"/>
<rect x="528" y="313" width="5" height="1" fill="#ff3c3c"/>
<rect x="528" y="331" width="5" height="1" fill="#ff3c3c"/>
<rect x="528" y="313" width="1" height="19" fill="#ff3c3c"/>
<rect x="532" y="313" width="1" height="19" fill="#ff3c3c"/>
<rect x="536" y="299" width="1" height="8" fill="#ff3c3c"/>
<rect x="536" y="315" width="1" height="6" fill="#ff3c3c"/>
<rect x="534" y="307" width="5" height="1" fill="#ff3c3c"/>
<rect x="534" y="314" width="5" height="1" fill="#ff3c3c"/>
<rect x="534" y="307" width="1" height="8" fill="#ff3c3c"/>
<rect x="538" y="307" width="1" height="8" fill="#ff3c3c"/>
<rect x="542" y="302" width="1" height="14" fill="#00ffff"/>
<rect x="540" y="307" width="5" height="5" fill="#00ffff"/>
<rect x="541" y="308" width="3" height="3" fill="#00f0f0"/>
<rect x="548" y="297" width="1" height="6" fill="#ff3c3c"/>
<rect x="548" y="312" width="1" height="1" fill="#ff3c3c"/>
<rect x="546" y="303" width="5" height="1" fill="#ff3c3c"/>
<rect x="546" y="311" width="5" height="1" fill="#ff3c3c"/>
<rect x="546" y="303" width="1" height="9" fill="#ff3c3c"/>
<rect x="550" y="303" width="1" height="9" fill="#ff3c3c"/>
<rect x="554" y="291" width="1" height="2" fill="#ff3c3c"/>
<rect x="554" y="303" width="1" height="8" fill="#ff3c3c"/>
<rect x="552" y="293" width="5" height="1" fill="#ff3c3c"/>
<rect x="552" y="302" width="5" height="1" fill="#ff3c3c"/>
<rect x="552" y="293" width="1" height="10" fill="#ff3c3c"/>
<rect x="556" y="293" width="1" height="10" fill="#ff3c3c"/>
<rect x="560" y="290" width="1" height="26" fill="#00ffff"/>
<rect x="558" y="293" width="5" height="15" fill="#00ffff"/>
<rect x="559" y="294" width="3" height="13" fill="#00f0f0"/>
<rect x="566" y="296" width="1" height="2" fill="#ff3c3c"/>
<rect x="566" y="311" width="1" height="1" fill="#ff3c3c"/>
<rect x="564" y="298" width="5" height="1" fill="#ff3c3c"/>
<rect x="564" y="310" width="5" height="1" fill="#ff3c3c"/>
<rect x="564" y="298" width="1" height="13" fill="#ff3c3c"/>
<rect x="568" y="298" width="1" height="13" fill="#ff3c3c"/>
<rect x="572" y="284" width="1" height="6" fill="#ff3c3c"/>
<rect x="572" y="300" width="1" height="1" fill="#ff3c3c"/>
<rect x="570" y="290" width="5" height="1" fill="#ff3c3c"/>
<rect x="570" y="299" width="5" height="1" fill="#ff3c3c"/>
<rect x="570" y="290" width="1" height="10" fill="#ff3c3c"/>
<rect x="574" y="290" width="1" height="10" fill="#ff3c3c"/>
<rect x="578" y="286" width="1" height="39" fill="#00ffff"/>
<rect x="576" y="289" width="5" height="34" fill="#00ffff"/>
<rect x="577" y="290" width="3" height="32" fill="#00f0f0"/>
<rect x="584" y="306" width="1" height="1" fill="#ff3c3c"/>
<rect x="584" y="323" width="1" height="8" fill="#ff3c3c"/>
<rect x="582" y="307" width="5" height="1" fill="#ff3c3c"/>
<rect x="582" y="322" width="5" height="1" fill="#ff3c3c"/>
<rect x="582" y="307" width="1" height="16" fill="#ff3c3c"/>
<rect x="586" y="307" width="1" height="16" fill="#ff3c3c"/>
<rect x="590" y="304" width="1" height="34" fill="#00ffff"/>
<rect x="588" y="307" width="5" height="25" fill="#00ffff"/>
<rect x="589" y="308" width="3" height="23" fill="#00f0f0"/>
<rect x="596" y="324" width="1" height="16" fill="#00ffff"/>
<rect x="594" y="333" width="5" height="5" fill="#00ffff"/>
<rect x="595" y="334" width="3" height="3" fill="#00f0f0"/>
<rect x="602" y="327" width="1" height="8" fill="#ff3c3c"/>
<rect x="602" y="336" width="1" height="9" fill="#ff3c3c"/>
<rect x="600" y="335" width="5" height="1" fill="#ff3c3c"/>
<rect x="608" y="327" width="1" height="15" fill="#00ffff"/>
<rect x="606" y="334" width="5" height="5" fill="#00ffff"/>
<rect x="607" y="335" width="3" height="3" fill="#00f0f0"/>
<rect x="614" y="334" width="1" height="14" fill="#00ffff"/>
<rect x="612" y="337" width="5" height="9" fill="#00ffff"/>
<rect x="613" y="338" width="3" height="7" fill="#00f0f0"/>
<rect x="620" y="339" width="1" height="19" fill="#00ffff"/>
<rect x="618" y="344" width="5" height="10" fill="#00ffff"/>
<rect x="619" y="345" width="3" height="8" fill="#00f0f0"/>
<rect x="626" y="345" width="1" height="3" fill="#ff3c3c"/>
<rect x="626" y="357" width="1" height="8" fill="#ff3c3c"/>
<rect x="624" y="348" width="5" height="1" fill="#ff3c3c"/>
<rect x="624" y="356" width="5" height="1" fill="#ff3c3c"/>
<rect x="624" y="348" width="1" height="9" fill="#ff3c3c"/>
<rect x="628" y="348" width="1" height="9" fill="#ff3c3c"/>
<rect x="632" y="337" width="1" height="9" fill="#ff3c3c"/>
<rect x="632" y="349" width="1" height="16" fill="#ff3c3c"/>
<rect x="630" y="346" width="5" height="1" fill="#ff3c3c"/>
<rect x="630" y="348" width="5" height="1" fill="#ff3c3c"/>
<rect x="630" y="346" width="1" height="3" fill="#ff3c3c"/>
<rect x="634" y="346" width="1" height="3" fill="#ff3c3c"/>
<rect x="638" y="317" width="1" height="5" fill="#ff3c3c"/>
<rect x="638" y="348" width="1" height="2" fill="#ff3c3c"/>
<rect x="636" y="322" width="5" height="1" fill="#ff3c3c"/>
<rect x="636" y="347" width="5" height="1" fill="#ff3c3c"/>
<rect x="636" y="322" width="1" height="26" fill="#ff3c3c"/>
<rect x="640" y="322" width="1" height="26" fill="#ff3c3c"/>
<rect x="644" y="311" width="1" height="46" fill="#00ffff"/>
<rect x="642" y="322" width="5" height="33" fill="#00ffff"/>
<rect x="643" y="323" width="3" height="31" fill="#00f0f0"/>
<rect x="650" y="351" width="1" height="36" fill="#00ffff"/>
<rect x="648" y="353" width="5" height="20" fill="#00ffff"/>
<rect x="649" y="354" width="3" height="18" fill="#00f0f0"/>
<rect x="656" y="365" width="1" height="4" fill="#ff3c3c"/>
<rect x="656" y="374" width="1" height="4" fill="#ff3c3c"/>
<rect x="654" y="369" width="5" height="1" fill="#ff3c3c"/>
<rect x="654" y="373" width="5" height="1" fill="#ff3c3c"/>
<rect x="654" y="369" width="1" height="5" fill="#ff3c3c"/>
<rect x="658" y="369" width="1" height="5" fill="#ff3c3c"/>
<rect x="662" y="367" width="1" height="21" fill="#00ffff"/>
<rect x="660" y="369" width="5" height="11" fill="#00ffff"/>
<rect x="661" y="370" width="3" height="9" fill="#00f0f0"/>
<rect x="668" y="369" width="1" height="67" fill="#00ffff"/>
<rect x="666" y="378" width="5" height="37" fill="#00ffff"/>
<rect x="667" y="379" width="3" height="35" fill="#00f0f0"/>
<rect x="674" y="410" width="1" height="32" fill="#00ffff"/>
<rect x="672" y="412" width="5" height="29" fill="#00ffff"/>
<rect x="673" y="413" width="3" height="27" fill="#00f0f0"/>
<rect x="680" y="426" width="1" height="2" fill="#ff3c3c"/>
<rect x="680" y="438" width="1" height="14" fill="#ff3c3c"/>
<rect x="678" y="428" width="5" height="1" fill="#ff3c3c"/>
<rect x="678" y="437" width="5" height="1" fill="#ff3c3c"/>
<rect x="678" y="428" width="1" height="10" fill="#ff3c3c"/>
<rect x="682" y="428" width="1" height="10" fill="#ff3c3c"/>
<rect x="686" y="425" width="1" height="19" fill="#00ffff"/>
<rect x="684" y="427" width="5" height="15" fill="#00ffff"/>
<rect x="685" y="428" width="3" height="13" fill="#00f0f0"/>
<rect x="692" y="420" width="1" height="2" fill="#ff3c3c"/>
<rect x="692" y="441" width="1" height="7" fill="#ff3c3c"/>
<rect x="690" y="422" width="5" height="1" fill="#ff3c3c"/>
<rect x="690" y="440" width="5" height="1" fill="#ff3c3c"/>
<rect x="690" y="422" width="1" height="19" fill="#ff3c3c"/>
<rect x="694" y="422" width="1" height="19" fill="#ff3c3c"/>
<rect x="698" y="414" width="1" height="22" fill="#00ffff"/>
<rect x="696" y="422" width="5" height="5" fill="#00ffff"/>
<rect x="697" y="423" width="3" height="3" fill="#00f0f0"/>
<rect x="704" y="409" width="1" height="22" fill="#00ffff"/>
<rect x="702" y="426" width="5" height="4" fill="#00ffff"/>
<rect x="703" y="427" width="3" height="2" fill="#00f0f0"/>
<rect x="710" y="415" width="1" height="5" fill="#ff3c3c"/>
<rect x="710" y="429" width="1" height="11" fill="#ff3c3c"/>
<rect x="708" y="420" width="5" height="1" fill="#ff3c3c"/>
<rect x="708" y="428" width="5" height="1" fill="#ff3c3c"/>
<rect x="708" y="420" width="1" height="9" fill="#ff3c3c"/>
<rect x="712" y="420" width="1" height="9" fill="#ff3c3c"/>
<rect x="716" y="386" width="1" height="11" fill="#ff3c3c"/>
<rect x="716" y="422" width="1" height="5" fill="#ff3c3c"/>
<rect x="714" y="397" width="5" height="1" fill="#ff3c3c"/>
<rect x="714" y="421" width="5" height="1" fill="#ff3c3c"/>
<rect x="714" y="397" width="1" height="25" fill="#ff3c3c"/>
<rect x="718" y="397" width="1" height="25" fill="#ff3c3c"/>
<rect x="722" y="393" width="1" height="15" fill="#00ffff"/>
<rect x="720" y="397" width="5" height="3" fill="#00ffff"/>
<rect x="721" y="398" width="3" height="1" fill="#00f0f0"/>
<rect x="728" y="376" width="1" height="15" fill="#ff3c3c"/>
<rect x="728" y="400" width="1" height="20" fill="#ff3c3c"/>
<rect x="726" y="391" width="5" height="1" fill="#ff3c3c"/>
<rect x="726" y="399" width="5" height="1" fill="#ff3c3c"/>
<rect x="726" y="391" width="1" height="9" fill="#ff3c3c"/>
<rect x="730" y="391" width="1" height="9" fill="#ff3c3c"/>
<rect x="734" y="379" width="1" height="21" fill="#00ffff"/>
<rect x="732" y="389" width="5" height="3" fill="#00ffff"/>
<rect x="733" y="390" width="3" height="1" fill="#00f0f0"/>
<rect x="740" y="377" width="1" height="10" fill="#ff3c3c"/>
<rect x="740" y="391" width="1" height="16" fill="#ff3c3c"/>
<rect x="738" y="387" width="5" height="1" fill="#ff3c3c"/>
<rect x="738" y="390" width="5" height="1" fill="#ff3c3c"/>
<rect x="738" y="387" width="1" height="4" fill="#ff3c3c"/>
<rect x="742" y="387" width="1" height="4" fill="#ff3c3c"/>
<rect x="746" y="376" width="1" height="5" fill="#ff3c3c"/>
<rect x="746" y="388" width="1" height="7" fill="#ff3c3c"/>
<rect x="744" y="381" width="5" height="1" fill="#ff3c3c"/>
<rect x="744" y="387" width="5" height="1" fill="#ff3c3c"/>
<rect x="744" y="381" width="1" height="7" fill="#ff3c3c"/>
<rect x="748" y="381" width="1" height="7" fill="#ff3c3c"/>
<rect x="752" y="369" width="1" height="22" fill="#00ffff"/>
<rect x="750" y="379" width="5" height="6" fill="#00ffff"/>
<rect x="751" y="380" width="3" height="4" fill="#00f0f0"/>
<rect x="758" y="353" width="1" height="1" fill="#ff3c3c"/>
<rect x="758" y="386" width="1" height="4" fill="#ff3c3c"/>
<rect x="756" y="354" width="5" height="1" fill="#ff3c3c"/>
<rect x="756" y="385" width="5" height="1" fill="#ff3c3c"/>
<rect x="756" y="354" width="1" height="32" fill="#ff3c3c"/>
<rect x="760" y="354" width="1" height="32" fill="#ff3c3c"/>
<rect x="764" y="344" width="1" height="27" fill="#00ffff"/>
<rect x="762" y="354" width="5" height="14" fill="#00ffff"/>
<rect x="763" y="355" width="3" height="12" fill="#00f0f0"/>
<rect x="770" y="342" width="1" height="14" fill="#ff3c3c"/>
<rect x="770" y="367" width="1" height="4" fill="#ff3c3c"/>
<rect x="768" y="356" width="5" height="1" fill="#ff3c3c"/>
<rect x="768" y="366" width="5" height="1" fill="#ff3c3c"/>
<rect x="768" y="356" width="1" height="11" fill="#ff3c3c"/>
<rect x="772" y="356" width="1" height="11" fill="#ff3c3c"/>
<rect x="776" y="344" width="1" height="3" fill="#ff3c3c"/>
<rect x="776" y="356" width="1" height="1" fill="#ff3c3c"/>
<rect x="774" y="347" width="5" height="1" fill="#ff3c3c"/>
<rect x="774" y="355" width="5" height="1" fill="#ff3c3c"/>
<rect x="774" y="347" width="1" height="9" fill="#ff3c3c"/>
<rect x="778" y="347" width="1" height="9" fill="#ff3c3c"/>
<rect x="782" y="339" width="1" height="17" fill="#00ffff"/>
<rect x="780" y="347" width="5" height="6" fill="#00ffff"/>
<rect x="781" y="348" width="3" height="4" fill="#00f0f0"/>
<rect x="788" y="345" width="1" height="17" fill="#00ffff"/>
<rect x="786" y="350" width="5" height="6" fill="#00ffff"/>
<rect x="787" y="351" width="3" height="4" fill="#00f0f0"/>
<rect x="794" y="329" width="1" height="7" fill="#ff3c3c"/>
<rect x="794" y="357" width="1" height="3" fill="#ff3c3c"/>
<rect x="792" y="336" width="5" height="1" fill="#ff3c3c"/>
<rect x="792" y="356" width="5" height="1" fill="#ff3c3c"/>
<rect x="792" y="336" width="1" height="21" fill="#ff3c3c"/>
<rect x="796" y="336" width="1" height="21" fill="#ff3c3c"/>
<rect x="800" y="326" width="1" height="19" fill="#00ffff"/>
<rect x="798" y="334" width="5" height="9" fill="#00ffff"/>
<rect x="799" y="335" width="3" height="7" fill="#00f0f0"/>
<rect x="806" y="336" width="1" height="1" fill="#ff3c3c"/>
<rect x="806" y="343" width="1" height="2" fill="#ff3c3c"/>
<rect x="804" y="337" width="5" height="1" fill="#ff3c3c"/>
<rect x="804" y="342" width="5" height="1" fill="#ff3c3c"/>
<rect x="804" y="337" width="1" height="6" fill="#ff3c3c"/>
<rect x="808" y="337" width="1" height="6" fill="#ff3c3c"/>
<rect x="812" y="336" width="1" height="19" fill="#00ffff"/>
<rect x="810" y="337" width="5" height="10" fill="#00ffff"/>
<rect x="811" y="338" width="3" height="8" fill="#00f0f0"/>
<rect x="818" y="341" width="1" height="21" fill="#00ffff"/>
<rect x="816" y="345" width="5" height="16" fill="#00ffff"/>
<rect x="817" y="346" width="3" height="14" fill="#00f0f0"/>
<rect x="824" y="351" width="1" height="4" fill="#ff3c3c"/>
<rect x="824" y="360" width="1" height="6" fill="#ff3c3c"/>
<rect x="822" y="355" width="5" height="1" fill="#ff3c3c"/>
<rect x="822" y="359" width="5" height="1" fill="#ff3c3c"/>
<rect x="822" y="355" width="1" height="5" fill="#ff3c3c"/>
<rect x="826" y="355" width="1" height="5" fill="#ff3c3c"/>
<rect x="830" y="344" width="1" height="18" fill="#00ffff"/>
<rect x="828" y="354" width="5" height="3" fill="#00ffff"/>
<rect x="829" y="355" width="3" height="1" fill="#00f0f0"/>
<rect x="836" y="336" width="1" height="9" fill="#ff3c3c"/>
<rect x="836" y="357" width="1" height="3" fill="#ff3c3c"/>
<rect x="834" y="345" width="5" height="1" fill="#ff3c3c"/>
<rect x="834" y="356" width="5" height="1" fill="#ff3c3c"/>
<rect x="834" y="345" width="1" height="12" fill="#ff3c3c"/>
<rect x="838" y="345" width="1" height="12" fill="#ff3c3c"/>
<rect x="842" y="327" width="1" height="16" fill="#ff3c3c"/>
<rect x="842" y="346" width="1" height="1" fill="#ff3c3c"/>
<rect x="840" y="343" width="5" height="1" fill="#ff3c3c"/>
<rect x="840" y="345" width="5" height="1" fill="#ff3c3c"/>
<rect x="840" y="343" width="1" height="3" fill="#ff3c3c"/>
<rect x="844" y="343" width="1" height="3" fill="#ff3c3c"/>
<rect x="848" y="341" width="1" height="20" fill="#00ffff"/>
<rect x="846" y="342" width="5" height="17" fill="#00ffff"/>
<rect x="847" y="343" width="3" height="15" fill="#00f0f0"/>
<rect x="854" y="350" width="1" height="2" fill="#ff3c3c"/>
<rect x="854" y="358" width="1" height="4" fill="#ff3c3c"/>
<rect x="852" y="352" width="5" height="1" fill="#ff3c3c"/>
<rect x="852" y="357" width="5" height="1" fill="#ff3c3c"/>
<rect x="852" y="352" width="1" height="6" fill="#ff3c3c"/>
<rect x="856" y="352" width="1" height="6" fill="#ff3c3c"/>
<rect x="860" y="319" width="1" height="1" fill="#ff3c3c"/>
<rect x="860" y="353" width="1" height="3" fill="#ff3c3c"/>
<rect x="858" y="320" width="5" height="1" fill="#ff3c3c"/>
<rect x="858" y="352" width="5" height="1" fill="#ff3c3c"/>
<rect x="858" y="320" width="1" height="33" fill="#ff3c3c"/>
<rect x="862" y="320" width="1" height="33" fill="#ff3c3c"/>
<rect x="866" y="311" width="1" height="4" fill="#ff3c3c"/>
<rect x="866" y="321" width="1" height="4" fill="#ff3c3c"/>
<rect x="864" y="315" width="5" height="1" fill="#ff3c3c"/>
<rect x="864" y="320" width="5" height="1" fill="#ff3c3c"/>
<rect x="864" y="315" width="1" height="6" fill="#ff3c3c"/>
<rect x="868" y="315" width="1" height="6" fill="#ff3c3c"/>
<rect x="872" y="305" width="1" height="4" fill="#ff3c3c"/>
<rect x="872" y="316" width="1" height="7" fill="#ff3c3c"/>
<rect x="870" y="309" width="5" height="1" fill="#ff3c3c"/>
<rect x="870" y="315" width="5" height="1" fill="#ff3c3c"/>
<rect x="870" y="309" width="1" height="7" fill="#ff3c3c"/>
<rect x="874" y="309" width="1" height="7" fill="#ff3c3c"/>
<rect x="878" y="275" width="1" height="6" fill="#ff3c3c"/>
<rect x="878" y="309" width="1" height="2" fill="#ff3c3c"/>
<rect x="876" y="281" width="5" height="1" fill="#ff3c3c"/>
<rect x="876" y="308" width="5" height="1" fill="#ff3c3c"/>
<rect x="876" y="281" width="1" height="28" fill="#ff3c3c"/>
<rect x="880" y="281" width="1" height="28" fill="#ff3c3c"/>
<rect x="884" y="266" width="1" height="2" fill="#ff3c3c"/>
<rect x="884" y="282" width="1" height="3" fill="#ff3c3c"/>
<rect x="882" y="268" width="5" height="1" fill="#ff3c3c"/>
<rect x="882" y="281" width="5" height="1" fill="#ff3c3c"/>
<rect x="882" y="268" width="1" height="14" fill="#ff3c3c"/>
<rect x="886" y="268" width="1" height="14" fill="#ff3c3c"/>
<rect x="890" y="251" width="1" height="29" fill="#00ffff"/>
<rect x="888" y="268" width="5" height="11" fill="#00ffff"/>
<rect x="889" y="269" width="3" height="9" fill="#00f0f0"/>
<rect x="896" y="265" width="1" height="6" fill="#ff3c3c"/>
<rect x="896" y="277" width="1" height="1" fill="#ff3c3c"/>
<rect x="894" y="271" width="5" height="1" fill="#ff3c3c"/>
<rect x="894" y="276" width="5" height="1" fill="#ff3c3c"/>
<rect x="894" y="271" width="1" height="6" fill="#ff3c3c"/>
<rect x="898" y="271" width="1" height="6" fill="#ff3c3c"/>
<rect x="902" y="252" width="1" height="7" fill="#ff3c3c"/>
<rect x="902" y="274" width="1" height="1" fill="#ff3c3c"/>
<rect x="900" y="259" width="5" height="1" fill="#ff3c3c"/>
<rect x="900" y="273" width="5" height="1" fill="#ff3c3c"/>
<rect x="900" y="259" width="1" height="15" fill="#ff3c3c"/>
<rect x="904" y="259" width="1" height="15" fill="#ff3c3c"/>
<rect x="908" y="253" width="1" height="16" fill="#00ffff"/>
<rect x="906" y="259" width="5" height="6" fill="#00ffff"/>
<rect x="907" y="260" width="3" height="4" fill="#00f0f0"/>
<rect x="914" y="261" width="1" height="19" fill="#00ffff"/>
<rect x="912" y="263" width="5" height="16" fill="#00ffff"/>
<rect x="913" y="264" width="3" height="14" fill="#00f0f0"/>
<rect x="920" y="270" width="1" height="31" fill="#00ffff"/>
<rect x="918" y="277" width="5" height="13" fill="#00ffff"/>
<rect x="919" y="278" width="3" height="11" fill="#00f0f0"/>
<rect x="926" y="283" width="1" height="19" fill="#00ffff"/>
<rect x="924" y="290" width="5" height="11" fill="#00ffff"/>
<rect x="925" y="291" width="3" height="9" fill="#00f0f0"/>
<rect x="932" y="274" width="1" height="11" fill="#ff3c3c"/>
<rect x="932" y="300" width="1" height="4" fill="#ff3c3c"/>
<rect x="930" y="285" width="5" height="1" fill="#ff3c3c"/>
<rect x="930" y="299" width="5" height="1" fill="#ff3c3c"/>
<rect x="930" y="285" width="1" height="15" fill="#ff3c3c"/>
<rect x="934" y="285" width="1" height="15" fill="#ff3c3c"/>
<rect x="938" y="282" width="1" height="18" fill="#00ffff"/>
<rect x="936" y="285" width="5" height="14" fill="#00ffff"/>
<rect x="937" y="286" width="3" height="12" fill="#00f0f0"/>
<rect x="944" y="292" width="1" height="20" fill="#00ffff"/>
<rect x="942" y="297" width="5" height="13" fill="#00ffff"/>
<rect x="943" y="298" width="3" height="11" fill="#00f0f0"/>
<rect x="950" y="303" width="1" height="5" fill="#ff3c3c"/>
<rect x="950" y="309" width="1" height="3" fill="#ff3c3c"/>
<rect x="948" y="308" width="5" height="1" fill="#ff3c3c"/>
<rect x="956" y="293" width="1" height="3" fill="#ff3c3c"/>
<rect x="956" y="309" width="1" height="1" fill="#ff3c3c"/>
<rect x="954" y="296" width="5" height="1" fill="#ff3c3c"/>
<rect x="954" y="308" width="5" height="1" fill="#ff3c3c"/>
<rect x="954" y="296" width="1" height="13" fill="#ff3c3c"/>
<rect x="958" y="296" width="1" height="13" fill="#ff3c3c"/>
<rect x="962" y="285" width="1" height="9" fill="#ff3c3c"/>
<rect x="962" y="295" width="1" height="10" fill="#ff3c3c"/>
<rect x="960" y="294" width="5" height="1" fill="#ff3c3c"/>
<rect x="968" y="281" width="1" height="7" fill="#ff3c3c"/>
<rect x="968" y="295" width="1" height="7" fill="#ff3c3c"/>
<rect x="966" y="288" width="5" height="1" fill="#ff3c3c"/>
<rect x="966" y="294" width="5" height="1" fill="#ff3c3c"/>
<rect x="966" y="288" width="1" height="7" fill="#ff3c3c"/>
<rect x="970" y="288" width="1" height="7" fill="#ff3c3c"/>
<rect x="974" y="282" width="1" height="16" fill="#00ffff"/>
<rect x="972" y="286" width="5" height="4" fill="#00ffff"/>
<rect x="973" y="287" width="3" height="2" fill="#00f0f0"/>
<rect x="980" y="273" width="1" height="15" fill="#ff3c3c"/>
<rect x="980" y="289" width="1" height="12" fill="#ff3c3c"/>
<rect x="978" y="288" width="5" height="1" fill="#ff3c3c"/>
<rect x="986" y="275" width="1" height="3" fill="#ff3c3c"/>
<rect x="986" y="285" width="1" height="7" fill="#ff3c3c"/>
<rect x="984" y="278" width="5" height="1" fill="#ff3c3c"/>
<rect x="984" y="284" width="5" height="1" fill="#ff3c3c"/>
<rect x="984" y="278" width="1" height="7" fill="#ff3c3c"/>
<rect x="988" y="278" width="1" height="7" fill="#ff3c3c"/>
<rect x="992" y="270" width="1" height="23" fill="#00ffff"/>
<rect x="990" y="278" width="5" height="6" fill="#00ffff"/>
<rect x="991" y="279" width="3" height="4" fill="#00f0f0"/>
<rect x="998" y="282" width="1" height="24" fill="#00ffff"/>
<rect x="996" y="282" width="5" height="22" fill="#00ffff"/>
<rect x="997" y="283" width="3" height="20" fill="#00f0f0"/>
<rect x="1004" y="296" width="1" height="2" fill="#ff3c3c"/>
<rect x="1004" y="304" width="1" height="7" fill="#ff3c3c"/>
<rect x="1002" y="298" width="5" height="1" fill="#ff3c3c"/>
<rect x="1002" y="303" width="5" height="1" fill="#ff3c3c"/>
<rect x="1002" y="298" width="1" height="6" fill="#ff3c3c"/>
<rect x="1006" y="298" width="1" height="6" fill="#ff3c3c"/>
<rect x="1010" y="291" width="1" height="15" fill="#00ffff"/>
<rect x="1008" y="298" width="5" height="1" fill="#00ffff"/>
<rect x="1016" y="286" width="1" height="2" fill="#ff3c3c"/>
<rect x="1016" y="301" width="1" height="8" fill="#ff3c3c"/>
<rect x="1014" y="288" width="5" height="1" fill="#ff3c3c"/>
<rect x="1014" y="300" width="5" height="1" fill="#ff3c3c"/>
<rect x="1014" y="288" width="1" height="13" fill="#ff3c3c"/>
<rect x="1018" y="288" width="1" height="13" fill="#ff3c3c"/>
<rect x="1022" y="273" width="1" height="2" fill="#ff3c3c"/>
<rect x="1022" y="288" width="1" height="3" fill="#ff3c3c"/>
<rect x="1020" y="275" width="5" height="1" fill="#ff3c3c"/>
<rect x="1020" y="287" width="5" height="1" fill="#ff3c3c"/>
<rect x="1020" y="275" width="1" height="13" fill="#ff3c3c"/>
<rect x="1024" y="275" width="1" height="13" fill="#ff3c3c"/>
<rect x="1028" y="261" width="1" height="4" fill="#ff3c3c"/>
<rect x="1028" y="277" width="1" height="3" fill="#ff3c3c"/>
<rect x="1026" y="265" width="5" height="1" fill="#ff3c3c"/>
<rect x="1026" y="276" width="5" height="1" fill="#ff3c3c"/>
<rect x="1026" y="265" width="1" height="12" fill="#ff3c3c"/>
<rect x="1030" y="265" width="1" height="12" fill="#ff3c3c"/>
<rect x="1034" y="253" width="1" height="3" fill="#ff3c3c"/>
<rect x="1034" y="267" width="1" height="3" fill="#ff3c3c"/>
<rect x="1032" y="256" width="5" height="1" fill="#ff3c3c"/>
<rect x="1032" y="266" width="5" height="1" fill="#ff3c3c"/>
<rect x="1032" y="256" width="1" height="11" fill="#ff3c3c"/>
<rect x="1036" y="256" width="1" height="11" fill="#ff3c3c"/>
<rect x="1040" y="255" width="1" height="54" fill="#00ffff"/>
<rect x="1038" y="256" width="5" height="50" fill="#00ffff"/>
<rect x="1039" y="257" width="3" height="48" fill="#00f0f0"/>
<rect x="1046" y="296" width="1" height="18" fill="#00ffff"/>
<rect x="1044" y="303" width="5" height="1" fill="#00ffff"/>
<rect x="1052" y="301" width="1" height="20" fill="#00ffff"/>
<rect x="1050" y="302" width="5" height="1" fill="#00ffff"/>
<rect x="1058" y="276" width="1" height="5" fill="#ff3c3c"/>
<rect x="1058" y="305" width="1" height="11" fill="#ff3c3c"/>
<rect x="1056" y="281" width="5" height="1" fill="#ff3c3c"/>
<rect x="1056" y="304" width="5" height="1" fill="#ff3c3c"/>
<rect x="1056" y="281" width="1" height="24" fill="#ff3c3c"/>
<rect x="1060" y="281" width="1" height="24" fill="#ff3c3c"/>
<rect x="1064" y="262" width="1" height="5" fill="#ff3c3c"/>
<rect x="1064" y="282" width="1" height="3" fill="#ff3c3c"/>
<rect x="1062" y="267" width="5" height="1" fill="#ff3c3c"/>
<rect x="1062" y="281" width="5" height="1" fill="#ff3c3c"/>
<rect x="1062" y="267" width="1" height="15" fill="#ff3c3c"/>
<rect x="1066" y="267" width="1" height="15" fill="#ff3c3c"/>
<rect x="1070" y="260" width="1" height="3" fill="#ff3c3c"/>
<rect x="1070" y="269" width="1" height="11" fill="#ff3c3c"/>
<rect x="1068" y="263" width="5" height="1" fill="#ff3c3c"/>
<rect x="1068" y="268" width="5" height="1" fill="#ff3c3c"/>
<rect x="1068" y="263" width="1" height="6" fill="#ff3c3c"/>
<rect x="1072" y="263" width="1" height="6" fill="#ff3c3c"/>
<rect x="1076" y="263" width="1" height="2" fill="#ff3c3c"/>
<rect x="1076" y="269" width="1" height="5" fill="#ff3c3c"/>
<rect x="1074" y="265" width="5" height="1" fill="#ff3c3c"/>
<rect x="1074" y="268" width="5" height="1" fill="#ff3c3c"/>
<rect x="1074" y="265" width="1" height="4" fill="#ff3c3c"/>
<rect x="1078" y="265" width="1" height="4" fill="#ff3c3c"/>
<rect x="1082" y="257" width="1" height="6" fill="#ff3c3c"/>
<rect x="1082" y="267" width="1" height="11" fill="#ff3c3c"/>
<rect x="1080" y="263" width="5" height="1" fill="#ff3c3c"/>
<rect x="1080" y="266" width="5" height="1" fill="#ff3c3c"/>
<rect x="1080" y="263" width="1" height="4" fill="#ff3c3c"/>
<rect x="1084" y="263" width="1" height="4" fill="#ff3c3c"/>
<rect x="1088" y="260" width="1" height="23" fill="#00ffff"/>
<rect x="1086" y="264" width="5" height="12" fill="#00ffff"/>
<rect x="1087" y="265" width="3" height="10" fill="#00f0f0"/>
<rect x="1094" y="263" width="1" height="39" fill="#00ffff"/>
<rect x="1092" y="275" width="5" height="16" fill="#00ffff"/>
<rect x="1093" y="276" width="3" height="14" fill="#00f0f0"/>
<rect x="1100" y="258" width="1" height="3" fill="#ff3c3c"/>
<rect x="1100" y="292" width="1" height="4" fill="#ff3c3c"/>
<rect x="1098" y="261" width="5" height="1" fill="#ff3c3c"/>
<rect x="1098" y="291" width="5" height="1" fill="#ff3c3c"/>
<rect x="1098" y="261" width="1" height="31" fill="#ff3c3c"/>
<rect x="1102" y="261" width="1" height="31" fill="#ff3c3c"/>
</g>
<g fill="none" stroke-width="1" shape-rendering="crispEdges">
<path d="M56 126.5h3m0 1h10m0 -1h2m0 -1h2m0 -1h2m0 -1h2m0 -1h2m0 -1h2m0 -1h1m0 -1h1m0 -1h2m0 -1h1m0 -1h1m0 -1h1m0 -1h1m0 -2h1m-1 1h1m0 -2h1m0 -1h1m0 -1h1m0 -2h1m-1 1h1m0 -2h1m0 -2h1m-1 1h1m0 -2h1m0 -2h1m-1 1h1m0 -2h1m0 -1h1m0 -2h1m-1 1h1m0 -2h1m0 -1h1m0 -2h1m-1 1h1m0 -2h1m0 -1h1m0 -2h1m-1 1h1m0 -2h1m0 -1h1m0 -2h1m-1 1h1m0 -2h1m0 -1h1m0 -2h1m-1 1h1m0 -2h1m0 -1h1m0 -2h1m-1 1h1m0 -2h1m0 -1h1m0 -1h1m0 -2h1m-1 1h1m0 -2h1m0 -1h1m0 -1h1m0 -1h1m0 -2h1m-1 1h1m0 -2h1m0 -1h1m0 -2h1m-1 1h1m0 -2h1m0 -1h1m0 -2h1m-1 1h1m0 -2h1m0 -1h1m0 -2h1m-1 1h1m0 -2h1m0 -1h1m0 -1h1m0 -1h2m0 -1h1m0 -1h1m0 -1h2m0 -1h1m0 -1h2m0 -1h1m0 -1h2m0 -1h1m0 -1h2m0 -1h1m0 -1h2m0 -1h1m0 -1h2m0 -1h1m0 -1h2m0 -1h1m0 -1h2m0 -1h2m0 -1h3m0 -1h4m11 0h3m0 1h2m0 1h2m0 1h2m0 1h2m0 1h2m0 1h2m0 1h2m0 1h1m0 1h1m0 1h2m0 1h1m0 1h1m0 1h1m0 1h1m0 1h2m0 1h1m0 1h21m0 -1h12m0 -1h6m0 1h12m0 1h5m0 1h3m0 1h2m0 1h2m0 1h2m0 1h2m0 1h2m0 1h1m0 1h2m0 1h1m0 1h1m0 1h1m0 1h2m0 1h1m0 1h15m0 1h5m0 1h3m0 1h2m0 1h2m0 1h1m0 1h2m0 1h1m0 1h1m0 1h1m0 1h2m0 1h1m0 1h1m0 1h2m0 1h2m0 1h2m0 1h2m0 1h1m0 1h2m0 1h1m0 1h2m0 1h2m0 1h2m0 1h1m0 1h1m0 1h2m0 1h1m0 1h2m0 1h3m0 1h4m0 1h4m0 -1h2m0 -1h2m0 -1h2m0 -1h2m0 -1h2m0 -1h3m0 -1h3m0 -1h16m0 1h4m0 1h2m0 1h1m0 1h2m0 1h1m0 1h2m0 1h1m0 1h2m0 1h1m0 1h2m0 1h1m0 1h2m0 1h1m0 1h1m0 1h1m0 1h2m0 1h1m0 1h1m0 1h2m0 1h2m0 1h2m0 1h1m0 1h1m0 1h2m0 1h1m0 1h1m0 1h1m0 1h1m0 1h1m0 1h1m0 1h1m0 1h1m0 1h1m0 1h1m0 1h1m-1 1h1m0 1h1m0 1h1m0 1h1m0 1h2m0 1h2m0 1h4m0 1h5m0 1h3m0 1h2m0 1h2m0 1h2m0 1h3m0 1h3m0 1h2m0 1h2m0 1h2m0 1h2m0 1h1m0 1h1m0 1h1m-1 1h1m0 1h1m0 1h1m0 1h1m0 1h1m-1 1h1m0 1h1m-1 1h1m0 1h1m-1 1h1m0 1h1m-1 1h1m0 1h1m-1 1h1m0 1h1m-1 1h1m0 1h1m0 1h1m-1 1h1m0 1h1m0 1h1m0 1h1m-1 1h1m0 1h1m0 1h1m-1 1h1m0 1h1m-1 1h1m0 1h1m-1 1h1m0 1h1m-1 1h1m0 1h1m-1 1h1m0 1h1m-1 1h1m-1 1h1m0 1h1m-1 1h1m0 1h1m-1 1h1m0 1h1m-1 1h1m-1 1h1m0 1h1m-1 1h1m0 1h1m-1 1h1m0 1h1m-1 1h1m-1 1h1m0 1h1m-1 1h1m0 1h1m-1 1h1m0 1h1m-1 1h1m0 1h1m-1 1h1m0 1h1m-1 1h1m0 1h1m-1 1h1m0 1h1m-1 1h1m0 1h1m0 1h1m-1 1h1m0 1h1m0 1h1m-1 1h1m0 1h1m0 1h1m0 1h1m0 1h1m-1 1h1m0 1h1m0 1h1m0 1h1m0 1h1m0 1h1m0 1h1m-1 1h1m0 1h1m0 1h1m0 1h1m0 1h1m-1 1h1m0 1h1m0 1h1m-1 1h1m0 1h1m0 1h1m-1 1h1m0 1h1m0 1h1m0 1h1m0 1h1m0 1h1m0 1h1m0 1h1m0 1h1m0 1h1m0 1h1m-1 1h1m0 1h1m0 1h1m0 1h1m0 1h1m-1 1h1m0 1h1m-1 1h1m0 1h1m0 1h1m-1 1h1m0 1h1m-1 1h1m0 1h1m0 1h1m0 1h1m0 1h1m0 1h1m0 1h1m0 1h1m0 1h1m0 1h1m0 1h1m0 1h1m0 1h1m0 1h1m0 1h1m-1 1h1m0 1h1m-1 1h1m0 1h1m0 1h1m-1 1h1m0 1h1m-1 1h1m0 1h2m0 1h3m0 1h3m0 1h3m0 1h4m0 1h5m0 1h3m0 1h45m0 -1h3m0 -1h4m0 -1h5m0 -1h3m0 -1h2m0 -1h1m0 -1h1m0 -2h1m-1 1h1m0 -2h1m0 -1h1m0 -1h1m0 -1h1m0 -2h1m-1 1h1m0 -2h1m0 -1h1m0 -2h1m-1 1h1m0 -2h1m0 -1h1m0 -1h1m0 -1h2m0 -1h1m0 -1h1m0 -1h2m0 -1h2m0 -1h4m0 1h5m0 1h3m0 1h2m0 1h2m0 1h2m0 1h2m0 1h1m0 1h1m0 1h1m0 1h1m0 1h1m0 1h1m0 1h1m0 1h1m0 1h2m0 1h1m0 1h1m0 1h1m0 1h1m-1 1h1m0 1h1m0 1h1m0 1h1m-1 1h1m0 1h1m0 1h1m-1 1h1m0 1h1m0 1h1m-1 1h1m0 1h1m0 1h1m-1 1h1m0 1h1m0 1h1m0 1h1m0 1h1m0 1h1m0 1h1m0 1h1m0 1h1m0 1h1m-1 1h1m0 1h1m0 1h1m0 1h1m-1 1h1m0 1h1m0 1h1m0 1h1m0 1h2m0 1h1m0 1h1m0 1h2m0 1h1m0 1h2m0 1h1m0 1h2m0 1h2m0 1h2m0 1h2m0 1h2m0 1h3m0 1h3m0 1h4m0 -1h6m0 1h6m0 1h5m0 1h3m0 1h3m0 -1h3m0 -1h2m0 -1h2m0 -1h1m0 -1h2m0 -1h2m0 -1h3m0 -1h3m0 -1h3m0 -1h3m0 -1h3m0 -1h10m0 -1h6m0 1h6m0 1h5m0 1h3m0 1h4m0 -1h5m0 -1h3m0 -1h2m0 -1h1m0 -1h1m0 -1h1m0 -1h1m0 -1h1m0 -1h1m0 -2h1m-1 1h1m0 -2h1m0 -2h1m-1 1h1m0 -2h1m0 -2h1m-1 1h1m0 -2h1m0 -2h1m-1 1h1m0 -3h1m-1 1h1m0 -3h1m-1 1h1m0 -3h1m-1 1h1m0 -3h1m-1 1h1m0 -3h1m-1 1h1m0 -2h1m0 -1h1m0 -2h1m-1 1h1m0 -2h1m0 -1h1m0 -1h1m0 -1h1m0 -1h1m0 -2h1m-1 1h1m0 -2h1m0 -1h1m0 -1h1m0 -1h1m0 -2h1m-1 1h1m0 -2h1m0 -1h1m0 -2h1m-1 1h1m0 -2h1m0 -1h1m0 -1h1m0 -1h1m0 -1h1m0 -1h1m0 -1h1m0 -1h1m0 -1h1m0 -1h2m0 -1h1m0 -1h2m0 -1h3m0 -1h3m0 -1h3m0 -1h2m0 -1h2m0 -1h2m0 -1h4m0 -1h18m0 -1h6m0 -1h6m0 -1h12m0 1h6m0 1h6m0 1h5m0 1h3m0 1h2m0 1h1m0 1h1m0 1h2m0 1h1m0 1h1m0 1h1m0 1h1m0 1h1m0 1h1m0 1h1m0 1h3m0 1h12m0 -1h4m0 -1h2m0 -1h1m0 -1h2m0 -1h3m0 1h6m0 1h6m0 1h4m0 1h2m0 1h2m0 1h4m0 1h5m0 -1h3m0 -1h3m0 -1h3m0 -1h2m0 -1h2m0 -1h2m0 -1h4m0 -1h12m0 -1h3" stroke="#ffff00"/>
<path d="M56 149.5h15m0 -1h6m0 -1h5m0 -1h3m0 -1h3m0 -1h3m0 -1h2m0 -1h2m0 -1h2m0 -1h2m0 -1h2m0 -1h2m0 -1h3m0 -1h3m0 -1h2m0 -1h2m0 -1h2m0 -1h3m0 -1h3m0 -1h2m0 -1h2m0 -1h2m0 -1h2m0 -1h2m0 -1h1m0 -1h2m0 -1h1m0 -1h2m0 -1h2m0 -1h2m0 -1h2m0 -1h1m0 -1h2m0 -1h1m0 -1h2m0 -1h2m0 -1h3m0 -1h3m0 -1h2m0 -1h2m0 -1h2m0 -1h3m0 -1h3m0 -1h3m0 -1h3m0 -1h2m0 -1h2m0 -1h2m0 -1h2m0 -1h2m0 -1h2m0 -1h3m0 -1h3m0 -1h4m0 -1h5m0 -1h3m0 -1h3m0 -1h3m0 -1h28m0 1h6m0 1h6m0 1h6m0 1h5m0 1h3m0 1h3m0 1h3m0 1h4m0 1h4m0 1h2m0 1h2m0 1h3m0 1h3m0 1h2m0 1h2m0 1h2m0 1h2m0 1h2m0 1h1m0 1h2m0 1h1m0 1h2m0 1h1m0 1h2m0 1h1m0 1h2m0 1h1m0 1h2m0 1h1m0 1h1m0 1h1m0 1h2m0 1h1m0 1h1m0 1h2m0 1h1m0 1h2m0 1h1m0 1h2m0 1h2m0 1h3m0 1h3m0 1h2m0 1h2m0 1h1m0 1h2m0 1h2m0 1h3m0 1h2m0 1h2m0 1h2m0 1h2m0 1h2m0 1h2m0 1h2m0 1h2m0 1h1m0 1h2m0 1h1m0 1h2m0 1h2m0 1h2m0 1h1m0 1h1m0 1h2m0 1h1m0 1h1m0 1h2m0 1h1m0 1h2m0 1h1m0 1h2m0 1h1m0 1h2m0 1h1m0 1h1m0 1h1m0 1h2m0 1h1m0 1h1m0 1h1m0 1h1m0 1h2m0 1h1m0 1h1m0 1h1m0 1h1m0 1h2m0 1h1m0 1h1m0 1h1m0 1h1m0 1h2m0 1h1m0 1h1m0 1h1m0 1h1m0 1h1m0 1h1m0 1h1m0 1h1m0 1h1m0 1h1m0 1h1m0 1h1m0 1h1m0 1h1m0 1h1m0 1h1m0 1h1m-1 1h1m0 1h1m0 1h1m0 1h1m0 1h1m0 1h1m-1 1h1m0 1h1m0 1h1m0 1h1m-1 1h1m0 1h1m0 1h1m0 1h1m0 1h1m-1 1h1m0 1h1m0 1h1m0 1h1m0 1h1m0 1h1m0 1h1m0 1h1m0 1h1m0 1h1m0 1h1m0 1h1m0 1h1m0 1h1m0 1h1m0 1h1m0 1h1m0 1h1m0 1h1m0 1h1m0 1h1m0 1h1m0 1h1m0 1h1m0 1h1m0 1h1m0 1h1m0 1h1m0 1h1m0 1h1m0 1h1m0 1h1m0 1h1m0 1h1m0 1h1m0 1h1m0 1h1m-1 1h1m0 1h1m0 1h1m0 1h1m0 1h1m0 1h1m0 1h1m-1 1h1m0 1h1m0 1h1m0 1h1m0 1h1m0 1h1m0 1h1m-1 1h1m0 1h1m0 1h1m0 1h1m0 1h1m0 1h1m0 1h1m-1 1h1m0 1h1m0 1h1m0 1h1m0 1h1m0 1h1m0 1h1m-1 1h1m0 1h1m0 1h1m0 1h1m0 1h1m0 1h1m0 1h1m-1 1h1m0 1h1m0 1h1m0 1h1m0 1h1m0 1h1m0 1h2m0 1h1m0 1h1m0 1h2m0 1h1m0 1h2m0 1h1m0 1h2m0 1h1m0 1h2m0 1h2m0 1h3m0 1h2m0 1h2m0 1h2m0 1h3m0 1h3m0 1h3m0 1h3m0 1h2m0 1h2m0 1h2m0 1h4m0 1h5m0 1h3m0 1h3m0 1h3m0 1h4m0 1h6m0 1h6m0 1h6m0 1h6m0 1h6m0 1h6m0 1h18m0 -1h12m0 1h12m0 1h5m0 1h3m0 1h2m0 1h2m0 1h1m0 1h2m0 1h1m0 1h2m0 1h1m0 1h2m0 1h1m0 1h1m0 1h1m0 1h2m0 1h1m0 1h1m0 1h1m0 1h1m0 1h2m0 1h1m0 1h1m0 1h2m0 1h1m0 1h2m0 1h1m0 1h1m0 1h1m0 1h2m0 1h1m0 1h1m0 1h1m0 1h1m0 1h2m0 1h1m0 1h1m0 1h2m0 1h1m0 1h2m0 1h1m0 1h2m0 1h1m0 1h2m0 1h1m0 1h2m0 1h2m0 1h2m0 1h2m0 1h2m0 1h2m0 1h2m0 1h2m0 1h3m0 1h3m0 1h3m0 1h3m0 1h4m0 1h6m0 1h30m0 1h6m0 -1h6m0 -1h6m0 -1h6m0 -1h5m0 -1h3m0 -1h2m0 -1h2m0 -1h2m0 -1h2m0 -1h2m0 -1h2m0 -1h2m0 -1h2m0 -1h1m0 -1h2m0 -1h1m0 -1h2m0 -1h2m0 -1h2m0 -1h2m0 -1h2m0 -1h2m0 -1h2m0 -1h1m0 -1h2m0 -1h1m0 -1h2m0 -1h1m0 -1h2m0 -1h1m0 -1h2m0 -1h2m0 -1h2m0 -1h1m0 -1h1m0 -1h2m0 -1h1m0 -1h1m0 -1h1m0 -1h1m0 -1h2m0 -1h1m0 -1h1m0 -1h2m0 -1h1m0 -1h2m0 -1h1m0 -1h2m0 -1h1m0 -1h2m0 -1h1m0 -1h1m0 -1h1m0 -1h2m0 -1h1m0 -1h1m0 -1h2m0 -1h1m0 -1h2m0 -1h1m0 -1h2m0 -1h2m0 -1h2m0 -1h2m0 -1h2m0 -1h3m0 -1h3m0 -1h2m0 -1h2m0 -1h2m0 -1h3m0 -1h3m0 -1h3m0 -1h3m0 -1h4m0 -1h5m0 -1h3m0 -1h4m0 -1h4m0 -1h2m0 -1h2m0 -1h3m0 -1h3m0 -1h2m0 -1h2m0 -1h2m0 -1h2m0 -1h2m0 -1h2m0 -1h3m0 -1h3m0 -1h3m0 -1h3m0 -1h3m0 -1h3m0 -1h3m0 -1h3m0 -1h4m0 -1h5m0 -1h3m0 -1h3m0 -1h3m0 -1h10m0 1h6m0 1h6m0 1h6m0 1h18m0 -1h5m0 -1h3m0 -1h10m0 -1h6m0 -1h3" stroke="#e8e8e8"/>
<path d="M56 173.5h3m0 -1h18m0 1h6m0 1h4m0 1h2m0 1h2m0 1h2m0 1h2m0 1h2m0 1h2m0 1h2m0 1h2m0 1h3m0 1h3m0 1h2m0 1h2m0 1h1m0 1h2m0 1h2m0 1h3m0 1h4m0 1h12m0 -1h5m0 -1h3m0 -1h3m0 -1h3m0 -1h3m0 -1h3m0 -1h4m0 -1h5m0 -1h3m0 -1h2m0 -1h2m0 -1h1m0 -1h2m0 -1h1m0 -1h1m0 -1h1m0 -1h2m0 -1h1m0 -1h1m0 -1h1m0 -1h1m0 -2h1m-1 1h1m0 -2h1m0 -1h1m0 -1h1m0 -1h1m0 -1h1m0 -2h1m-1 1h1m0 -2h1m0 -1h1m0 -1h1m0 -1h1m0 -1h1m0 -2h1m-1 1h1m0 -2h1m0 -1h1m0 -1h1m0 -1h1m0 -2h1m-1 1h1m0 -2h1m0 -1h1m0 -2h1m-1 1h1m0 -2h1m0 -1h1m0 -2h1m-1 1h1m0 -2h1m0 -1h1m0 -2h1m-1 1h1m0 -2h3m0 -1h12m0 1h6m0 1h6m0 1h5m0 1h3m0 1h3m0 1h3m0 1h3m0 1h3m0 1h2m0 1h2m0 1h2m0 1h3m0 1h3m0 1h20m0 1h1m0 1h1m0 1h1m0 1h1m0 1h1m0 1h1m0 1h1m0 1h1m-1 1h1m0 1h1m0 1h1m0 1h1m-1 1h1m0 1h1m0 1h1m0 1h1m0 1h1m-1 1h1m0 1h1m0 1h1m0 1h1m0 1h1m0 1h1m0 1h1m0 1h1m0 1h1m0 1h1m0 1h1m0 1h1m0 1h2m0 1h1m0 1h1m0 1h2m0 1h1m0 1h2m0 1h1m0 1h2m0 1h2m0 1h4m0 1h4m0 1h2m0 1h2m0 1h4m0 1h4m0 1h2m0 1h2m0 1h2m0 1h2m0 1h1m0 1h2m0 1h1m0 1h1m-1 1h1m0 1h1m-1 1h1m0 1h1m-1 1h1m0 1h1m-1 1h1m0 1h1m-1 1h1m0 1h1m0 1h1m-1 1h1m0 1h1m-1 1h1m0 1h1m-1 1h1m0 1h1m-1 1h1m0 1h1m-1 1h1m0 1h1m0 1h1m-1 1h1m0 1h1m-1 1h1m0 1h1m0 1h1m-1 1h1m0 1h1m-1 1h1m0 1h1m0 1h1m0 1h1m-1 1h1m0 1h1m0 1h1m0 1h1m-1 1h1m0 1h1m0 1h1m-1 1h1m0 1h1m-1 1h1m0 1h1m0 1h1m-1 1h1m0 1h1m-1 1h1m0 1h1m0 1h1m0 1h1m-1 1h1m0 1h1m0 1h1m0 1h1m-1 1h1m0 1h1m0 1h1m0 1h1m0 1h1m0 1h1m0 1h1m0 1h1m0 1h1m0 1h1m0 1h1m-1 1h1m0 1h1m0 1h1m0 1h1m0 1h1m0 1h1m0 1h1m0 1h1m0 1h1m0 1h1m0 1h1m0 1h1m0 1h2m0 1h1m0 1h1m0 1h1m-1 1h1m0 1h1m-1 1h1m0 1h1m0 1h1m-1 1h1m0 1h1m-1 1h1m0 1h1m0 1h1m-1 1h1m0 1h1m0 1h1m-1 1h1m0 1h1m0 1h1m-1 1h1m0 1h1m0 1h1m-1 1h1m0 1h1m0 1h1m-1 1h1m0 1h1m0 1h1m-1 1h1m0 1h1m0 1h1m0 1h1m0 1h1m-1 1h1m0 1h1m0 1h1m0 1h1m0 1h1m-1 1h1m0 1h1m-1 1h1m0 1h1m0 1h1m-1 1h1m0 1h1m-1 1h1m0 1h1m0 1h1m-1 1h1m0 1h1m-1 1h1m0 1h1m0 1h1m-1 1h1m0 1h1m-1 1h1m0 1h1m0 1h1m-1 1h1m0 1h1m-1 1h1m0 1h1m0 1h1m-1 1h1m0 1h1m-1 1h1m0 1h1m0 1h1m-1 1h1m0 1h1m-1 1h1m0 1h1m0 1h1m-1 1h1m0 1h1m-1 1h1m0 1h1m0 1h1m-1 1h1m0 1h1m-1 1h1m0 1h1m-1 1h1m0 1h1m-1 1h1m0 1h1m-1 1h1m0 1h1m0 1h1m-1 1h1m0 1h1m0 1h1m-1 1h1m0 1h1m0 1h1m-1 1h1m0 1h1m0 1h1m-1 1h1m0 1h1m0 1h1m-1 1h1m0 1h1m0 1h1m-1 1h1m0 1h3m0 1h4m0 1h1m0 1h1m0 1h1m0 1h1m0 1h1m0 1h1m0 1h2m0 1h2m0 1h3m0 -1h3m0 -1h4m0 -1h6m0 -1h6m0 -1h5m0 -1h3m0 -1h3m0 -1h3m0 -1h3m0 -1h3m0 -1h2m0 -1h2m0 -1h2m0 -1h2m0 -1h1m0 -1h1m0 -1h2m0 -1h1m0 -1h1m0 -1h2m0 -1h2m0 -1h2m0 -1h2m0 -1h2m0 -1h2m0 -1h1m0 -1h1m0 -1h2m0 -1h1m0 -1h3m0 -1h12m0 1h6m0 1h6m0 1h6m0 1h5m0 1h3m0 1h4m0 1h6m0 -1h6m0 -1h6m0 -1h4m0 1h2m0 1h1m0 1h2m0 1h2m0 1h3m0 1h2m0 1h2m0 1h2m0 1h2m-1 1h1m0 1h1m-1 1h1m0 1h1m-1 1h1m0 1h1m-1 1h1m0 1h1m-1 1h1m0 1h1m-1 1h1m0 1h1m-1 1h1m-1 1h1m0 1h1m-1 1h1m0 1h1m-1 1h1m-1 1h1m0 1h1m-1 1h1m-1 1h1m0 1h1m-1 1h1m0 1h1m-1 1h1m-1 1h1m0 1h1m-1 1h1m-1 1h1m0 1h1m-1 1h1m0 1h1m-1 1h1m0 1h1m-1 1h1m0 1h1m-1 1h1m0 1h1m-1 1h1m0 1h1m-1 1h1m0 1h1m-1 1h1m0 1h1m-1 1h1m0 1h1m-1 1h1m0 1h1m-1 1h1m0 1h1m-1 1h1m0 1h1m-1 1h1m0 1h1m0 1h1m-1 1h1m0 1h1m0 1h1m0 1h1m-1 1h1m0 1h1m0 1h1m0 1h1m-1 1h1m0 1h1m0 1h1m0 1h1m-1 1h1m0 1h1m0 1h1m0 1h1m0 1h1m-1 1h1m0 1h1m0 1h1m0 1h1m0 1h2m0 1h1m0 1h2m0 1h3m0 1h12m0 -1h6m0 -1h5m0 -1h3m0 -1h4m0 -1h6m0 -1h6m0 -1h6m0 -1h18m0 -1h12m0 -1h6m0 1h6m0 1h6m0 1h10m0 -1h2m0 -1h2m0 -1h2m0 -1h1m0 -1h1m0 -1h1m0 -1h1m0 -1h1m0 -1h1m0 -1h1m0 -1h1m0 -1h1m0 -1h1m0 -1h1m0 -1h1m0 -1h1m0 -2h1m-1 1h1m0 -2h1m0 -1h1m0 -2h1m-1 1h1m0 -2h1m0 -1h1m0 -1h1m0 -1h1m0 -1h1m0 -1h1m0 -1h1m0 -1h1m0 -2h1m-1 1h1m0 -2h1m0 -1h1m0 -2h1m-1 1h1m0 -2h1m0 -1h1m0 -2h1m-1 1h1m0 -2h1m0 -1h1m0 -2h1m-1 1h1m0 -2h1m0 -1h1m0 -1h1m0 -1h2m0 -1h1m0 -1h2m0 -1h3m0 -1h9m0 1h3m0 1h4m0 -1h5m0 -1h3m0 -1h4m0 -1h5m0 -1h3m0 -1h3m0 -1h3m0 -1h2m0 -1h2m0 -1h2m0 -1h2m0 -1h2m0 -1h2m0 -1h3m0 -1h3m0 -1h2m0 -1h2m0 -1h2m0 -1h2m0 -1h2m0 -1h1m0 -1h2m0 -1h2m0 -1h3m0 -1h3m0 -1h3m0 -1h3m0 -1h3m0 -1h2m0 -1h2m0 -1h1m0 -1h2m0 -1h1m0 -1h1m0 -1h1m0 -1h1m0 -1h1m0 -1h1m0 -1h1m0 -1h1m0 -1h1m0 -1h1m0 -1h1m0 -1h1m0 -1h1m0 -1h1m0 -1h1m0 -1h1m0 -1h1m0 -1h1m0 -1h1m0 -1h1m0 -1h1m0 -1h1m0 -1h1m0 -1h1m0 -1h1m0 -1h1m0 -1h1m0 -1h2m0 -1h1m0 -1h1m0 -2h1m-1 1h1m0 -3h1m-1 1h1m0 -2h1m0 -2h1m-1 1h1m0 -3h1m-1 1h1m0 -2h1m0 -2h1m-1 1h1m0 -3h1m-1 1h1m0 -2h1m0 -2h1m-1 1h1m0 -3h1m-1 1h1m0 -2h1m0 -1h2m0 -1h1m0 -1h2m0 -1h1m0 -1h2m0 -1h2m0 -1h3m0 -1h3m0 -1h3m0 1h3m0 1h4m0 1h5m0 1h3m0 1h4m0 1h6m0 -1h18m0 1h6m0 -1h17m0 -1h3m0 -1h1" stroke="#ff00ff"/>
<path d="M56 541.5h3m0 1h6m0 -1h6m0 -1h6m0 -1h5m0 -1h3m0 -1h2m0 -1h2m0 -1h2m0 -1h2m0 -1h2m0 -1h2m0 -1h2m0 -1h2m0 -1h2m0 -1h2m0 -1h2m0 -1h1m0 -1h2m0 -1h1m0 -1h2m0 -1h2m0 -1h2m0 -1h2m0 -1h1m0 -1h2m0 -1h1m0 -1h2m0 -1h1m0 -1h2m0 -1h1m0 -1h2m0 -1h2m0 -1h3m0 -1h3m0 -1h3m0 -1h3m0 -1h4m0 -1h6m0 -1h18m0 1h5m0 1h3m0 1h3m0 1h3m0 1h2m0 1h2m0 1h2m0 1h2m0 1h2m0 1h2m0 1h2m0 1h2m0 1h1m0 1h2m0 1h1m0 1h2m0 1h1m0 1h2m0 1h1m0 1h1m0 1h1m0 1h2m0 1h1m0 1h1m0 1h1m0 1h1m0 1h2m0 1h1m0 1h1m0 1h1m0 1h1m0 1h2m0 1h1m0 1h1m0 1h2m0 1h1m0 1h2m0 1h1m0 1h2m0 1h2m0 1h2m0 1h2m0 1h2m0 1h3m0 1h3m0 1h3m0 1h3m0 1h4m0 1h5m0 1h3m0 1h4m0 1h12m0 1h6m0 1h4m0 1h2m0 1h2m0 1h2m0 1h2m0 1h2m0 1h2m0 1h2m0 1h1m0 1h2m0 1h1m0 1h2m0 1h2m0 1h2m0 1h2m0 1h1m0 1h2m0 1h1m0 1h2m0 1h2m0 1h4m0 1h5m0 1h3m0 1h10m0 1h6m0 1h5m0 1h3m0 1h2m0 1h2m0 1h2m0 1h2m0 1h2m0 1h1m0 1h2m0 1h1m0 1h2m0 1h2m0 1h2m0 1h2m0 1h1m0 1h2m0 1h1m0 1h2m0 1h2m0 1h3m0 1h3m0 1h2m0 1h2m0 1h2m0 1h3m0 1h3m0 1h3m0 1h3m0 1h3m0 1h3m0 1h2m0 1h2m0 1h2m0 1h2m0 1h2m0 1h2m0 1h2m0 1h2m0 1h2m0 1h2m0 1h2m0 1h2m0 1h2m0 1h2m0 1h2m0 1h2m0 1h2m0 1h2m0 1h3m0 1h3m0 1h3m0 1h3m0 1h3m0 1h3m0 1h3m0 1h3m0 1h4m0 1h18m0 -1h5m0 -1h3m0 -1h2m0 -1h2m0 -1h2m0 -1h2m0 -1h2m0 -1h1m0 -1h2m0 -1h1m0 -1h1m0 -1h1m0 -1h2m0 -1h1m0 -1h1m0 -1h1m0 -1h1m0 -1h1m0 -1h1m0 -1h1m0 -1h1m0 -1h1m0 -1h1m0 -1h1m0 -1h1m0 -1h1m0 -1h1m0 -1h1m0 -1h1m0 -1h1m0 -1h1m0 -1h1m0 -1h1m0 -1h1m0 -1h1m0 -1h1m0 -1h1m0 -1h1m0 -1h1m0 -1h1m0 -1h1m0 -1h1m0 -1h1m0 -1h1m0 -1h1m0 -1h1m0 -1h1m0 -1h1m0 -1h1m0 -1h1m0 -1h1m0 -1h2m0 -1h1m0 -1h2m0 -1h1m0 -1h2m0 -1h1m0 -1h2m0 -1h1m0 -1h2m0 -1h2m0 -1h4m0 -1h6m0 -1h6m0 -1h18m0 1h6m0 1h6m0 -1h12m0 1h6m0 1h5m0 1h3m0 1h2m0 1h2m0 1h2m0 1h2m0 1h2m0 1h1m0 1h2m0 1h1m0 1h1m0 1h1m0 1h2m0 1h1m0 1h1m0 1h1m0 1h1m0 1h2m0 1h1m0 1h1m0 1h2m0 1h1m0 1h2m0 1h1m0 1h2m0 1h2m0 1h2m0 1h2m0 1h2m0 1h4m0 1h12m0 -1h5m0 -1h3m0 -1h2m0 -1h2m0 -1h2m0 -1h2m0 -1h2m0 -1h1m0 -1h2m0 -1h1m0 -1h2m0 -1h1m0 -1h2m0 -1h1m0 -1h2m0 -1h1m0 -1h2m0 -1h1m0 -1h1m0 -1h1m0 -1h2m0 -1h1m0 -1h1m0 -1h1m0 -1h1m0 -1h2m0 -1h1m0 -1h1m0 -1h1m0 -1h1m0 -1h2m0 -1h1m0 -1h1m0 -1h1m0 -1h1m0 -1h2m0 -1h1m0 -1h1m0 -1h1m0 -1h1m0 -1h1m0 -1h1m0 -1h1m0 -1h1m0 -1h2m0 -1h1m0 -1h2m0 -1h1m0 -1h1m0 -1h1m0 -1h2m0 -1h1m0 -1h1m0 -1h1m0 -1h1m0 -1h2m0 -1h1m0 -1h1m0 -1h2m0 -1h1m0 -1h2m0 -1h1m0 -1h2m0 -1h2m0 -1h2m0 -1h2m0 -1h2m0 -1h4m0 -1h6m0 -1h6m0 -1h6m0 -1h6m0 -1h12m0 -1h5m0 -1h3m0 -1h3m0 -1h3m0 -1h2m0 -1h2m0 -1h1m0 -1h2m0 -1h1m0 -1h2m0 -1h1m0 -1h2m0 -1h1m0 -1h2m0 -1h1m0 -1h2m0 -1h1m0 -1h1m0 -1h1m0 -1h2m0 -1h1m0 -1h1m0 -1h2m0 -1h1m0 -1h2m0 -1h1m0 -1h2m0 -1h1m0 -1h2m0 -1h1m0 -1h2m0 -1h2m0 -1h4m0 -1h18m0 1h5m0 1h3m0 1h2m0 1h2m0 1h2m0 1h2m0 1h2m0 1h2m0 1h3m0 1h3m0 1h3m0 1h3m0 1h3m0 1h3m0 1h4m0 1h6m0 1h6m0 1h6m0 1h5m0 1h3m0 1h3m0 1h3m0 1h3m0 1h3m0 1h4m0 1h12m0 -1h6m0 1h6m0 1h5m0 1h3m0 1h4m0 1h6m0 1h6m0 -1h12m0 -1h21" stroke="#ffff00"/>
<path d="M56 547.5h2m0 -1h3m0 -1h2m0 -1h1m0 -1h1m0 -1h1m0 -1h1m0 -1h1m0 -1h1m0 -1h2m0 -1h2m0 -1h2m0 -1h2m0 -1h2m0 -1h2m0 -1h2m0 -1h1m0 -1h2m0 -1h1m0 -1h2m0 -1h1m0 -1h2m0 -1h1m0 -1h1m0 -1h1m0 -1h1m0 -1h1m0 -1h1m0 -1h1m0 -1h1m0 -1h1m0 -1h2m0 -1h1m0 -1h1m0 -1h2m0 -1h1m0 -1h2m0 -1h1m0 -1h2m0 -1h1m0 -1h2m0 -1h1m0 -1h2m0 -1h1m0 -1h2m0 -1h1m0 -1h2m0 -1h2m0 -1h2m0 -1h2m0 -1h2m0 -1h2m0 1h2m0 1h2m0 1h10m0 1h5m0 1h3m0 1h3m0 1h3m0 1h4m0 1h4m0 1h2m0 1h1m0 1h2m0 1h1m0 1h1m0 1h1m0 1h2m0 1h1m0 1h1m0 1h2m0 1h1m0 1h2m0 1h1m0 1h2m0 1h1m0 1h2m0 1h1m0 1h1m0 1h1m0 1h1m-1 1h1m0 1h1m0 1h1m0 1h1m0 1h1m0 1h1m0 1h1m0 1h1m0 1h1m0 1h1m0 1h1m0 1h1m0 1h2m0 1h1m0 1h1m0 1h1m0 1h1m-1 1h1m0 1h1m0 1h1m0 1h1m-1 1h1m0 1h1m0 1h2m0 1h1m0 1h2m0 1h1m0 1h2m0 1h2m0 1h2m0 1h2m0 1h2m0 1h4m0 1h30m0 1h6m0 -1h6m0 -1h6m0 1h4m0 1h1m0 1h1m0 1h1m0 1h1m0 1h1m0 1h1m0 1h1m0 1h1m0 1h1m-1 1h1m0 1h1m0 1h1m0 1h1m0 1h1m0 1h1m0 1h2m0 1h1m0 1h1m0 1h1m0 1h1m0 1h2m0 1h1m0 1h1m0 1h2m0 1h1m0 1h2m0 1h2m0 1h3m0 1h4m0 1h4m0 -1h2m0 -1h1m0 -1h2m0 -1h3m0 1h6m0 -1h11m0 1h3m0 1h2m0 1h1m0 1h1m0 1h1m-1 1h1m0 1h1m0 1h1m0 1h1m0 1h1m0 1h1m0 1h1m0 1h1m0 1h1m0 1h1m0 1h1m0 1h1m0 1h1m0 1h1m0 1h1m0 1h2m0 1h3m0 1h2m0 1h2m0 1h1m0 1h2m0 1h2m0 1h3m0 1h8m0 1h2m0 1h2m0 1h4m0 1h6m0 -1h4m0 1h1m0 1h1m0 1h2m0 1h1m0 1h1m0 1h2m0 1h1m0 1h2m0 1h1m0 1h1m0 1h1m0 1h1m0 1h1m0 1h1m0 1h1m0 1h2m0 1h2m0 1h3m0 1h3m0 1h3m0 1h3m0 1h3m0 1h3m0 1h3m0 1h3m0 1h4m0 1h6m0 1h5m0 1h3m0 1h2m0 -1h1m0 -1h1m0 -1h2m0 -1h1m0 -1h3m0 1h4m0 -1h2m0 -1h2m0 -1h2m0 -1h1m0 -1h1m0 -1h2m0 -1h1m0 -1h1m0 -1h1m0 -1h1m0 -2h1m-1 1h1m0 -2h1m0 -1h1m0 -1h1m0 -1h1m0 -1h1m0 -1h1m0 -1h1m0 -1h1m0 -1h1m0 -2h1m-1 1h1m0 -2h1m0 -2h1m-1 1h1m0 -2h1m0 -2h1m-1 1h1m0 -2h1m0 -2h1m-1 1h1m0 -2h1m0 -2h1m-1 1h1m0 -2h1m0 -2h1m-1 1h1m0 -2h1m0 -1h1m0 -1h1m0 -2h1m-1 1h1m0 -2h1m0 -1h1m0 -1h1m0 -1h1m0 -2h1m-1 1h1m0 -2h1m0 -1h1m0 -2h1m-1 1h1m0 -2h1m0 -1h1m0 -1h1m0 -2h1m-1 1h1m0 -2h1m0 -1h1m0 -1h1m0 -1h1m0 -1h1m0 -1h2m0 -1h1m0 -1h1m0 -1h1m0 -1h1m0 -1h2m0 -1h1m0 -1h1m0 -1h1m0 -1h1m0 -1h1m0 -1h1m0 -1h1m0 -1h3m0 1h5m0 -1h3m0 -1h3m0 1h3m0 1h2m0 1h2m0 1h2m0 1h3m0 1h3m0 1h4m0 1h5m0 1h3m0 1h3m0 1h3m0 1h4m0 1h6m0 1h4m0 -1h1m0 -1h1m0 -1h2m0 -1h1m0 -1h2m0 1h3m0 1h2m0 1h2m0 1h1m0 1h2m0 1h1m0 1h2m0 1h2m0 1h2m0 1h2m0 1h2m0 1h2m0 1h1m-1 1h1m0 1h1m0 1h1m-1 1h1m0 1h1m0 1h1m-1 1h1m0 1h1m0 1h1m-1 1h1m0 1h1m-1 1h1m0 1h1m0 1h1m-1 1h1m0 1h1m-1 1h1m0 1h1m0 1h1m0 1h1m0 1h1m0 1h1m0 1h1m0 1h1m0 1h1m0 1h1m0 1h2m0 1h1m0 1h3m0 1h16m0 -1h2m0 -1h2m0 -1h2m0 -1h1m0 -1h1m0 -1h1m0 -1h1m0 -1h1m0 -1h1m0 -1h1m0 -1h1m0 -1h1m0 -1h1m0 -1h1m0 -1h1m0 -1h1m0 -1h1m0 -1h1m0 -1h1m0 -1h1m0 -1h1m0 -1h1m0 -1h1m0 -1h1m0 -1h1m0 -1h1m0 -1h1m0 -1h1m0 -1h1m0 -1h2m0 -1h1m0 -1h1m0 -1h1m0 -1h1m0 -1h1m0 -1h1m0 -1h1m0 -1h1m0 -1h1m0 -1h1m0 -1h2m0 -1h1m0 -1h1m0 -1h1m0 -2h1m-1 1h1m0 -2h1m0 -1h1m0 -2h1m-1 1h1m0 -2h1m0 -1h1m0 -1h1m0 -1h1m0 -1h1m0 -1h1m0 -1h1m0 -1h1m0 -1h1m0 -1h1m0 -1h1m0 -1h1m0 -1h1m0 -1h1m0 -1h1m0 -1h1m0 -1h1m0 -1h1m0 -1h1m0 -1h2m0 -1h1m0 -1h2m0 -1h1m0 -1h2m0 -1h2m0 -1h2m0 -1h1m0 -1h1m0 -1h2m0 -1h1m0 -1h1m0 -1h2m0 -1h2m0 -1h2m0 -1h2m0 -1h2m0 -1h4m0 -1h5m0 1h3m0 1h4m0 1h6m0 1h6m0 -1h12m0 1h6m0 1h4m0 -1h2m0 -1h1m0 -1h2m0 -1h1m0 -1h1m0 -1h1m0 -1h2m0 -1h1m0 -1h1m0 -1h1m0 -1h1m0 -1h2m0 -1h1m0 -1h1m0 -1h1m0 -2h1m-1 1h1m0 -2h1m0 -1h1m0 -2h1m-1 1h1m0 -2h1m0 -1h1m0 -1h1m0 -2h1m-1 1h1m0 -2h1m0 -1h1m0 -1h1m0 -1h1m0 -1h1m0 -1h2m0 -1h1m0 -1h1m0 -1h2m0 -1h1m0 -1h2m0 -1h1m0 -1h2m0 -1h1m0 -1h2m0 -1h2m0 -1h3m0 -1h4m0 1h4m0 1h2m0 1h1m0 1h2m0 1h1m0 1h1m0 1h1m0 1h2m0 1h1m0 1h1m0 1h2m0 1h2m0 1h2m0 1h2m0 1h1m0 1h2m0 1h1m0 1h1m0 1h1m0 1h1m0 1h1m0 1h1m0 1h1m0 1h2m0 1h1m0 1h2m0 1h2m0 1h3m0 1h3m0 1h3m0 1h4m0 1h12m0 1h6m0 -1h6m0 1h4m0 1h2m0 1h1m0 1h2m0 1h1m0 1h2m0 1h2m0 1h3m0 1h3m0 1h9m0 -1h3m0 -1h2m0 -1h2m0 -1h2m0 -1h2m0 -1h2m0 -1h2m0 -1h2m0 1h1m0 1h1m0 1h2m0 1h1m0 1h1m0 1h2m0 1h1m0 1h2m0 1h1m0 1h2m0 1h1m0 1h2m0 1h3m0 -1h4m0 -1h2m0 -1h2m0 -1h3m0 -1h3m0 -1h3m0 -1h3m0 -1h4m0 -1h6m0 1h4m0 1h2m0 1h2m0 1h3m0 -1h3m0 -1h1" stroke="#e8e8e8"/>
<path d="M56 750.5h1m0 -1h2m0 -1h2m0 -1h2m0 -1h1m0 -2h1m-1 1h1m0 -2h1m0 -1h1m0 -2h1m-1 1h1m0 -2h1m0 -1h1m0 -2h1m-1 1h1m0 -2h1m0 -1h1m0 -2h1m-1 1h1m0 -2h1m0 -1h1m0 -2h1m-1 1h1m0 -2h1m0 -1h1m0 -2h1m-1 1h1m0 -2h1m0 -1h1m0 -1h1m0 -2h1m-1 1h1m0 -2h1m0 -1h1m0 -1h1m0 -1h2m0 -1h1m0 -1h2m0 -1h1m0 -1h1m0 -1h1m0 -1h2m0 -1h1m0 -1h1m0 -1h2m0 -1h1m0 -1h2m0 -1h2m0 -1h3m0 -1h3m0 -1h3m0 -1h10m0 -1h6m0 -1h4m0 1h1m0 1h1m0 1h2m0 1h1m0 1h1m0 1h1m0 1h1m0 1h2m0 1h1m0 1h1m0 1h2m0 1h1m0 1h2m0 1h1m0 1h1m-1 1h1m0 1h1m0 1h1m-1 1h1m0 1h1m0 1h1m-1 1h1m0 1h1m0 1h1m0 1h1m-1 1h1m0 1h1m0 1h1m0 1h1m-1 1h1m0 1h1m0 1h1m0 1h1m0 1h1m0 1h1m0 1h1m0 1h1m0 1h1m0 1h1m-1 1h1m0 1h1m0 1h1m0 1h1m-1 1h1m0 1h1m0 1h1m-1 1h1m0 1h1m0 1h1m-1 1h1m0 1h1m0 1h1m-1 1h1m0 1h1m0 1h1m0 1h1m-1 1h1m0 1h1m0 1h1m0 1h1m-1 1h1m0 1h1m0 1h1m0 1h1m0 1h1m0 1h1m0 1h1m0 1h1m0 1h1m0 1h1m0 1h1m-1 1h1m0 1h1m0 1h1m0 1h1m0 1h1m0 1h1m0 1h2m0 1h1m0 1h1m0 1h2m0 1h2m0 1h2m0 1h2m0 1h1m0 1h2m0 1h9m0 -1h6m0 -1h5m0 -1h3m0 -1h2m0 -1h1m0 -1h1m0 -1h2m0 -1h1m0 -1h1m0 -2h1m-1 1h1m0 -3h1m-1 1h1m0 -2h1m0 -2h1m-1 1h1m0 -3h1m-1 1h1m0 -2h1m0 -1h1m0 -2h1m-1 1h1m0 -2h1m0 -1h1m0 -2h1m-1 1h1m0 -2h1m0 -1h1m0 -1h1m0 -1h2m0 -1h1m0 -1h2m0 -1h3m0 -1h2m0 -1h2m0 -1h1m0 -1h2m0 -1h1m0 -1h2m0 -1h1m0 -1h2m0 -1h3m0 1h4m0 1h1m0 1h1m0 1h1m0 1h1m0 1h1m0 1h1m0 1h1m0 1h1m-1 1h1m0 1h1m0 1h1m0 1h1m-1 1h1m0 1h1m0 1h1m0 1h1m0 1h1m0 1h1m0 1h1m0 1h1m0 1h2m0 1h2m0 1h2m0 1h2m0 1h1m0 1h2m0 1h1m0 1h2m0 1h2m0 1h4m0 1h5m0 -1h3m0 -1h8m0 -1h2m0 -1h1m0 -1h2m0 -1h1m0 -1h2m0 -1h1m0 -1h2m0 -1h7m0 1h2m0 1h2m0 1h2m0 1h1m0 1h1m0 1h2m0 1h1m0 1h1m0 1h1m0 1h1m0 1h2m0 1h1m0 1h1m0 1h2m0 1h2m0 1h2m0 1h2m0 1h2m0 1h3m0 1h3m0 1h4m0 1h6m0 1h6m0 1h6m0 -1h5m0 -1h3m0 -1h9m0 1h3m0 1h10m0 1h6m0 1h11m0 1h3m0 1h4m0 1h16m0 -1h2m0 -1h1m0 -1h2m0 -1h2m0 -1h3m0 -1h3m0 -1h3m0 -1h2m0 -1h1m0 -1h1m0 -2h1m-1 1h1m0 -2h1m0 -1h1m0 -1h1m0 -2h1m-1 1h1m0 -3h1m-1 1h1m0 -2h1m0 -2h1m-1 1h1m0 -3h1m-1 1h1m0 -2h1m0 -2h1m-1 1h1m0 -3h1m-1 1h1m0 -3h1m-1 1h1m0 -3h1m-1 1h1m0 -3h1m-1 1h1m0 -3h1m-1 1h1m0 -3h1m-1 1h1m0 -3h1m-1 1h1m0 -3h1m-1 1h1m0 -3h1m-1 1h1m0 -3h1m-1 1h1m0 -3h1m-1 1h1m0 -3h1m-1 1h1m0 -3h1m-1 1h1m0 -2h1m0 -2h1m-1 1h1m0 -3h1m-1 1h1m0 -2h1m0 -1h1m0 -2h1m-1 1h1m0 -2h1m0 -1h1m0 -2h1m-1 1h1m0 -2h1m0 -1h1m0 -1h1m0 -2h1m-1 1h1m0 -2h1m0 -1h1m0 -1h1m0 -1h1m0 -1h1m0 -2h1m-1 1h1m0 -2h1m0 -1h1m0 -1h2m0 -1h3m0 -1h3m0 -1h3m0 -1h3m0 -1h3m0 -1h2m0 1h1m0 1h1m0 1h1m0 1h1m0 1h1m0 1h1m0 1h1m0 1h1m0 1h1m-1 1h1m0 1h1m0 1h1m0 1h1m0 1h1m-1 1h1m0 1h1m-1 1h1m0 1h1m0 1h1m-1 1h1m0 1h1m-1 1h1m0 1h1m0 1h1m-1 1h1m0 1h1m-1 1h1m0 1h1m-1 1h1m0 1h1m-1 1h1m0 1h1m-1 1h1m0 1h1m-1 1h1m0 1h1m-1 1h1m0 1h1m-1 1h1m0 1h1m-1 1h1m0 1h1m-1 1h1m0 1h1m-1 1h1m0 1h1m0 1h1m-1 1h1m0 1h1m0 1h1m-1 1h1m0 1h1m0 1h1m-1 1h1m0 1h1m0 1h1m0 1h1m-1 1h1m0 1h1m0 1h1m0 1h1m-1 1h1m0 1h1m0 1h1m0 1h1m0 1h1m-1 1h1m0 1h1m0 1h1m0 1h1m0 1h2m0 1h2m0 1h8m0 -1h1m0 -1h1m0 -1h1m0 -1h1m0 -1h1m0 -1h2m0 -1h3m0 -1h4m0 1h10m0 1h2m0 1h2m0 1h3m0 1h3m0 1h2m0 1h2m0 1h2m0 1h2m0 1h2m0 1h2m0 1h3m0 1h3m0 1h9m0 -1h3m0 -1h3m0 -1h3m0 -1h2m0 -1h2m0 -1h2m0 -1h2m0 -1h1m0 -1h1m0 -2h1m-1 1h1m0 -2h1m0 -1h1m0 -1h1m0 -2h1m-1 1h1m0 -3h1m-1 1h1m0 -3h1m-1 1h1m0 -3h1m-1 1h1m0 -3h1m-1 1h1m0 -2h1m0 -2h1m-1 1h1m0 -3h1m-1 1h1m0 -2h1m0 -2h1m-1 1h1m0 -3h1m-1 1h1m0 -2h1m0 -2h1m-1 1h1m0 -2h1m0 -2h1m-1 1h1m0 -2h1m0 -2h1m-1 1h1m0 -2h1m0 -1h1m0 -2h1m-1 1h1m0 -2h1m0 -1h1m0 -2h1m-1 1h1m0 -2h1m0 -1h1m0 -1h1m0 -2h1m-1 1h1m0 -2h1m0 -1h1m0 -1h1m0 -1h1m0 -1h1m0 -1h2m0 -1h1m0 -1h1m0 -1h1m0 -1h1m0 -1h1m0 -1h1m0 -1h1m0 -1h2m0 -1h3m0 -1h3m0 -1h3m0 -1h2m0 -1h2m0 -1h2m0 -1h4m0 -1h12m0 -1h12m0 1h4m0 1h2m0 1h2m0 1h2m0 1h1m-1 1h1m0 1h1m0 1h1m-1 1h1m0 1h1m0 1h1m-1 1h1m0 1h1m0 1h1m-1 1h1m0 1h1m-1 1h1m0 1h1m0 1h1m-1 1h1m0 1h1m-1 1h1m0 1h1m0 1h1m-1 1h1m0 1h1m-1 1h1m0 1h1m0 1h1m-1 1h1m0 1h1m-1 1h1m0 1h1m0 1h1m0 1h1m0 1h2m0 1h1m0 1h2m0 1h3m0 1h2m0 1h2m0 1h1m0 1h2m0 1h1m0 1h2m0 1h1m0 1h2m0 1h1m0 -1h1m0 -1h1m0 -1h1m0 -1h1m0 -1h1m0 -1h1m0 -1h1m0 -2h1m-1 1h1m0 -2h1m0 -1h1m0 -2h1m-1 1h1m0 -2h1m0 -2h1m-1 1h1m0 -2h1m0 -2h1m-1 1h1m0 -2h1m0 -2h1m-1 1h1m0 -2h1m0 -1h1m0 -2h1m-1 1h1m0 -2h1m0 -1h1m0 -2h1m-1 1h1m0 -2h1m0 -1h1m0 -1h1m0 -2h1m-1 1h1m0 -2h1m0 -1h1m0 -1h1m0 -1h2m0 -1h1m0 -1h2m0 -1h2m0 -1h3m0 -1h3m0 -1h3m0 -1h3m0 -1h3m0 -1h4m0 1h4m0 1h1m0 1h1m0 1h1m0 1h1m0 1h1m0 1h1m0 1h1m-1 1h1m0 1h1m0 1h1m-1 1h1m0 1h1m0 1h1m-1 1h1m0 1h1m0 1h1m-1 1h1m0 1h1m0 1h1m-1 1h1m0 1h1m0 1h1m-1 1h1m0 1h1m0 1h1m-1 1h1m0 1h1m-1 1h1m0 1h1m-1 1h1m0 1h1m-1 1h1m0 1h1m-1 1h1m0 1h1m0 1h1m-1 1h1m0 1h1m-1 1h1m0 1h1m-1 1h1m0 1h1m-1 1h1m0 1h1m-1 1h1m0 1h1m0 1h1m-1 1h1m0 1h1m-1 1h1m0 1h1m0 1h1m-1 1h1m0 1h1m-1 1h1m0 1h1m0 1h1m0 1h1m0 1h2m0 1h1m0 1h3m0 1h4m0 -1h2m0 -1h2m0 -1h2m0 -1h1m0 -1h1m0 -1h2m0 -1h1m0 -1h1m0 -1h1m0 -1h1m0 -1h1m0 -1h1m0 -1h1m0 -1h1m0 -1h1m0 -2h1m-1 1h1m0 -2h1m0 -1h1m0 -2h1m-1 1h1m0 -2h1m0 -1h1m0 -1h1m0 -2h1m-1 1h1m0 -2h1m0 -1h1m0 -1h7m0 1h2m0 1h1m0 1h2m0 1h1m0 1h1m0 1h1m0 1h2m0 1h1m0 1h7m0 -1h1m0 -1h1m0 -1h2m0 -1h1m0 -1h1m0 -1h1m0 -2h1m-1 1h1m0 -2h1m0 -1h1m0 -2h1m-1 1h1m0 -2h1m0 -1h1m0 -2h1m-1 1h1m0 -2h1m0 -1h1m0 -2h1m-1 1h1m0 -2h1m0 1h2m0 1h2m0 1h2m0 1h1m0 1h1m0 1h1m-1 1h1m0 1h1m0 1h1m0 1h1m0 1h1m0 1h1m0 1h1m-1 1h1m0 1h1m0 1h1m0 1h2m0 1h3m0 1h2m0 -1h2m0 -1h2m0 -1h2m0 -1h1m0 -1h1m0 -1h1m0 -1h1m0 -1h1m0 -1h1m0 -1h1m0 -1h1m0 -1h1m0 -1h1m0 -1h1m0 -1h1m0 -1h1m0 -1h1m0 -1h1m0 -1h1m0 -1h1m0 -1h1m0 -1h2m0 -1h2m0 -1h4m0 1h4m0 -1h2m0 -1h2m0 -1h1" stroke="#ffff00"/>
<path d="M56 754.5h1m0 -2h1m-1 1h1m0 -3h1m-1 1h1m0 -3h1m-1 1h1m0 -3h1m-1 1h1m0 -3h1m-1 1h1m0 -4h1m-1 1h1m-1 1h1m0 -5h1m-1 1h1m-1 1h1m0 -5h1m-1 1h1m-1 1h1m0 -6h1m-1 1h1m-1 1h1m-1 1h1m0 -6h1m-1 1h1m-1 1h1m0 -5h1m-1 1h1m-1 1h1m0 -4h1m-1 1h1m0 -3h1m-1 1h1m0 -2h1m0 -2h1m-1 1h1m0 -2h1m0 -2h1m-1 1h1m0 -2h1m0 -1h1m0 -1h1m0 -2h1m-1 1h1m0 -2h1m0 -1h1m0 -1h1m0 -1h2m0 -1h1m0 -1h2m0 -1h3m0 -1h4m0 -1h2m0 -1h1m0 -1h2m0 -1h3m0 -1h11m0 -1h3m0 -1h3m0 1h3m0 1h4m0 -1h6m0 -1h4m-1 1h1m0 1h1m-1 1h1m-1 1h1m0 1h1m-1 1h1m-1 1h1m0 1h1m-1 1h1m0 1h1m-1 1h1m-1 1h1m0 1h1m-1 1h1m-1 1h1m0 1h1m-1 1h1m0 1h1m0 1h1m0 1h1m0 1h1m0 1h1m0 1h7m-1 1h1m0 1h1m-1 1h1m-1 1h1m0 1h1m-1 1h1m-1 1h1m-1 1h1m0 1h1m-1 1h1m-1 1h1m0 1h1m-1 1h1m-1 1h1m0 1h1m-1 1h1m-1 1h1m-1 1h1m0 1h1m-1 1h1m0 1h1m0 1h1m0 1h1m-1 1h1m0 1h1m0 1h1m0 1h3m0 1h4m0 1h1m-1 1h1m0 1h1m-1 1h1m0 1h1m-1 1h1m0 1h1m-1 1h1m0 1h1m-1 1h1m0 1h1m-1 1h1m0 1h1m-1 1h1m0 1h1m-1 1h1m0 1h1m0 1h1m-1 1h1m0 1h1m-1 1h1m0 1h1m0 1h1m0 1h1m0 1h1m0 1h1m0 1h1m0 1h1m0 1h2m0 1h1m0 1h2m0 1h1m0 1h1m0 1h1m0 1h1m-1 1h1m0 1h1m0 1h1m0 1h1m0 1h2m0 1h1m0 1h2m0 1h1m0 -1h2m0 -1h2m0 -1h2m0 1h1m0 1h1m0 1h2m0 1h1m0 1h1m0 -1h1m0 -1h1m0 -2h1m-1 1h1m0 -2h1m0 -1h1m0 -1h1m0 -1h2m0 -1h2m0 -1h3m0 -1h3m0 -1h3m0 -1h3m0 -1h2m0 -2h1m-1 1h1m0 -3h1m-1 1h1m0 -3h1m-1 1h1m0 -3h1m-1 1h1m0 -3h1m-1 1h1m0 -3h1m-1 1h1m0 -5h1m-1 1h1m-1 1h1m-1 1h1m0 -6h1m-1 1h1m-1 1h1m0 -6h1m-1 1h1m-1 1h1m-1 1h1m0 -6h1m-1 1h1m-1 1h1m0 -6h1m-1 1h1m-1 1h1m-1 1h1m0 -5h1m-1 1h1m0 -2h2m0 -1h1m0 -1h2m0 -1h3m0 1h4m0 1h2m0 1h1m0 1h2m0 1h1m0 -1h1m0 -2h1m-1 1h1m0 -2h1m0 -1h1m0 -2h1m-1 1h1m0 -2h1m0 -1h2m0 -1h1m0 -1h2m0 -1h1m0 1h1m-1 1h1m0 1h1m0 1h1m-1 1h1m0 1h1m0 1h1m-1 1h1m0 1h1m-1 1h1m0 1h1m-1 1h1m-1 1h1m0 1h1m-1 1h1m-1 1h1m0 1h1m-1 1h1m-1 1h1m-1 1h1m0 1h1m-1 1h1m-1 1h1m0 1h1m-1 1h1m-1 1h1m0 1h1m-1 1h1m0 1h1m-1 1h1m0 1h1m-1 1h1m0 1h1m-1 1h1m0 1h1m-1 1h1m0 1h1m-1 1h1m0 1h3m0 1h6m0 -1h4m0 1h1m0 1h1m0 1h2m0 1h1m0 1h2m0 1h3m0 1h2m0 -1h2m0 -1h1m0 -1h2m0 -1h1m0 -1h1m0 -2h1m-1 1h1m0 -2h1m0 -1h1m0 -2h1m-1 1h1m0 -2h1m0 1h2m0 1h1m0 1h3m-1 1h1m0 -3h1m-1 1h1m0 -3h1m-1 1h1m0 -3h1m-1 1h1m0 -3h1m-1 1h1m0 -3h1m-1 1h1m0 -3h2m-2 1h1m1 -2h3m0 -1h2m0 1h1m0 1h1m0 1h1m-1 1h1m0 1h1m0 1h1m0 1h1m0 1h1m-1 1h1m0 1h1m0 1h1m-1 1h1m0 1h1m0 1h1m-1 1h1m0 1h1m0 1h1m-1 1h1m0 1h1m0 1h1m-1 1h1m0 1h1m0 1h1m-1 1h1m0 1h1m0 1h1m0 1h1m0 1h2m0 1h1m0 1h3m0 -1h4m0 1h2m0 1h2m0 1h9m0 -1h3m0 -1h2m0 1h2m0 1h2m0 1h4m0 1h4m0 -1h1m0 -2h1m-1 1h1m0 -2h1m0 -1h1m0 -2h1m-1 1h1m0 -2h3m0 -1h4m0 1h2m0 1h2m0 1h2m0 1h1m0 1h1m0 1h2m0 1h1m0 1h2m0 -1h3m0 -1h4m0 1h5m0 1h3m0 1h9m0 1h3m0 1h4m0 1h6m0 -1h10m-1 -1h1m0 -2h1m-1 1h1m0 -4h1m-1 1h1m-1 1h1m0 -4h1m-1 1h1m0 -4h1m-1 1h1m-1 1h1m0 -4h1m-1 1h1m0 -3h1m-1 1h2m0 1h1m0 1h2m0 1h1m0 1h1m0 -1h2m0 -1h1m0 -1h2m0 -2h1m-1 1h1m0 -3h1m-1 1h1m0 -3h1m-1 1h1m0 -4h1m-1 1h1m-1 1h1m0 -4h1m-1 1h1m0 -3h1m-1 1h1m0 -4h1m-1 1h1m-1 1h1m0 -5h1m-1 1h1m-1 1h1m0 -5h1m-1 1h1m-1 1h1m0 -6h1m-1 1h1m-1 1h1m-1 1h1m0 -6h1m-1 1h1m-1 1h1m0 -5h1m-1 1h1m-1 1h1m0 -5h1m-1 1h1m-1 1h1m0 -4h1m-1 1h1m0 -3h1m-1 1h1m0 -4h1m-1 1h1m-1 1h1m0 -4h1m-1 1h1m0 -3h1m-1 1h1m0 -4h1m-1 1h1m-1 1h1m0 -4h1m-1 1h1m0 -3h1m-1 1h1m0 -3h1m-1 1h1m0 -3h1m-1 1h1m0 -3h1m-1 1h1m0 -3h1m-1 1h1m0 -2h1m0 -1h1m0 -2h1m-1 1h1m0 -2h1m0 -1h1m0 -1h1m0 -1h2m0 -1h2m0 -1h2m0 -1h1m0 -1h1m0 -1h2m0 -1h1m0 -1h1m0 -1h1m0 -1h1m0 -1h1m0 -1h1m0 -1h1m0 -1h1m0 1h1m0 1h1m0 1h2m0 1h1m0 1h8m0 -1h3m0 -1h2m-1 1h1m0 1h1m-1 1h1m-1 1h1m-1 1h1m0 1h1m-1 1h1m-1 1h1m-1 1h1m0 1h1m-1 1h1m-1 1h1m0 1h1m-1 1h1m-1 1h1m-1 1h1m0 1h1m-1 1h1m-1 1h1m-1 1h1m0 1h1m-1 1h1m0 1h1m0 1h1m-1 1h1m0 1h1m0 1h1m0 1h1m-1 1h1m0 1h1m-1 1h1m0 1h1m-1 1h1m0 1h1m-1 1h1m-1 1h1m0 1h1m-1 1h1m-1 1h1m0 1h1m-1 1h1m0 1h1m-1 1h1m-1 1h1m0 1h1m-1 1h1m-1 1h1m0 1h1m-1 1h1m-1 1h1m0 1h1m-1 1h1m-1 1h1m0 1h1m-1 1h1m-1 1h1m-1 1h1m0 1h1m-1 1h1m-1 1h1m0 1h1m-1 1h1m-1 1h1m0 1h1m-1 1h1m0 1h1m0 1h1m0 1h1m0 1h1m0 1h1m0 1h1m0 1h1m0 1h1m0 1h1m0 1h1m0 1h1m0 1h1m0 1h1m0 1h1m0 1h1m-1 1h1m0 1h1m0 1h1m0 1h1m0 1h2m0 1h1m0 1h2m0 1h1m0 -1h2m0 -1h1m0 -1h2m0 -1h1m0 -1h1m0 -1h1m0 -2h1m-1 1h1m0 -2h1m0 -1h1m0 -2h1m-1 1h1m0 -4h1m-1 1h1m-1 1h1m0 -5h1m-1 1h1m-1 1h1m0 -6h1m-1 1h1m-1 1h1m-1 1h1m0 -6h1m-1 1h1m-1 1h1m0 -5h1m-1 1h1m-1 1h1m0 -4h1m-1 1h2m0 1h1m-1 1h1m0 1h1m0 1h1m0 1h1m-1 1h1m0 1h1m0 1h2m0 1h1m0 1h2m0 1h2m0 1h3m0 1h2m0 1h1m0 1h1m0 1h2m0 1h1m0 1h2m0 1h3m0 1h2m0 1h1m0 1h1m0 1h1m-1 1h1m0 1h1m0 1h1m0 1h3m0 -1h5m0 1h3m0 1h2m0 -1h2m0 -1h1m0 -1h2m0 -1h1m0 -1h2m0 -1h1m0 -1h2m0 -1h1m0 -1h2m0 -1h1m0 -1h2m0 -1h1m0 -1h1m0 -1h1m0 -1h2m0 -1h1m0 -2h1m-1 1h1m0 -3h1m-1 1h1m0 -4h1m-1 1h1m-1 1h1m0 -5h1m-1 1h1m-1 1h1m0 -4h1m-1 1h1m0 -4h1m-1 1h1m-1 1h1m0 -5h1m-1 1h1m-1 1h1m0 -5h1m-1 1h1m-1 1h1m0 -5h1m-1 1h1m-1 1h1m0 -4h1m-1 1h1m0 -4h1m-1 1h1m-1 1h1m0 -5h1m-1 1h1m-1 1h1m0 -4h1m-1 1h1m0 -3h1m-1 1h1m0 -2h1m0 -2h1m-1 1h1m0 -2h1m0 -2h1m-1 1h1m0 -2h1m0 -1h1m0 -1h1m0 -2h1m-1 1h1m0 -2h1m0 -1h1m0 -1h1m0 -1h1m0 -1h1m0 -1h1m0 -1h1m0 -1h1m0 -1h1m0 -1h1m0 -1h1m0 -2h1m-1 1h1m0 -2h1m0 -1h1m0 -1h3m0 1h4m0 -1h1m0 -2h1m-1 1h1m0 -2h1m0 -1h1m0 -2h1m-1 1h1m0 -2h1m0 1h1m0 1h1m0 1h2m0 1h1m0 1h3m0 -1h4m0 -1h2m0 -1h1m0 -1h2m0 -1h3m0 1h4m0 1h2m0 1h2m0 1h2m0 -1h2m0 -1h2m0 -1h2m0 1h2m0 1h2m0 1h4m0 1h4m0 1h1m-1 1h1m0 1h1m0 1h1m-1 1h1m0 1h1m0 1h1m-1 1h1m0 1h1m-1 1h1m0 1h1m-1 1h1m-1 1h1m0 1h1m-1 1h1m-1 1h1m-1 1h1m0 1h1m-1 1h1m-1 1h1m0 1h1m-1 1h1m-1 1h1m0 1h1m-1 1h1m-1 1h1m-1 1h1m0 1h1m-1 1h1m0 1h1m-1 1h1m0 1h1m-1 1h1m0 1h1m-1 1h1m0 1h1m-1 1h1m0 1h1m-1 1h1m0 1h1m0 1h1m-1 1h1m0 1h1m-1 1h1m0 1h1m-1 1h1m0 1h1m-1 1h1m0 1h1m-1 1h1m0 1h1m0 -1h1m0 -1h1m0 -1h2m0 -1h1m0 -1h1m0 -1h1m0 -1h1m0 -1h2m0 -1h1m0 -1h1m0 1h1m-1 1h1m0 1h1m-1 1h1m0 1h1m0 1h1m-1 1h1m0 1h1m-1 1h1m0 1h2m0 1h3m0 1h2m-1 -1h1m0 -4h1m-1 1h1m-1 1h1m-1 1h1m0 -7h1m-1 1h1m-1 1h1m-1 1h1m0 -7h1m-1 1h1m-1 1h1m-1 1h1m0 -7h1m-1 1h1m-1 1h1m-1 1h1m0 -7h1m-1 1h1m-1 1h1m-1 1h1m0 -7h1m-1 1h1m-1 1h1m-1 1h1m0 -5h1m-1 1h1m0 -3h1m-1 1h1m0 -4h1m-1 1h1m-1 1h1m0 -4h1m-1 1h1m0 -3h1m-1 1h1m0 -3h1m-1 1h1m0 -3h1m-1 1h1m0 -2h1m0 -2h1m-1 1h1m0 -2h1m0 -2h1m-1 1h1m0 -2h1m0 -1h1m0 -1h1m0 -2h1m-1 1h1m0 -2h1m0 -1h1m0 -1h1m0 -1h1m0 -1h1m0 -1h2m0 -1h1m0 -1h1m0 1h2m0 1h2m0 1h4m0 1h4m0 -1h2m0 -1h1m0 -1h2m0 -1h7m0 1h1m0 1h1m-1 1h1m0 1h1m0 1h1m0 1h1m-1 1h1m0 1h1m-1 1h1m0 1h1m-1 1h1m0 1h1m-1 1h1m0 1h1m-1 1h1m-1 1h1m0 1h1m-1 1h1m0 1h1m-1 1h1m0 1h1m-1 1h1m-1 1h1m0 1h1m-1 1h1m-1 1h1m0 1h1m-1 1h1m-1 1h1m0 1h1m-1 1h1m0 1h1m-1 1h1m-1 1h1m0 1h1m-1 1h1m-1 1h1m0 1h1m-1 1h1m0 1h1m0 1h1m-1 1h1m0 1h1m0 1h1m0 1h1m-1 1h1m0 1h1m-1 1h1m0 1h1m-1 1h1m0 1h1m-1 1h1m0 1h1m-1 1h1m-1 1h1m0 1h1m-1 1h1m0 1h1m-1 1h1m0 1h1m-1 1h1m0 1h1m-1 1h1m0 1h1m-1 1h1m0 1h1m-1 1h1m0 1h1m-1 1h1m0 1h1m-1 1h1m0 1h1m0 1h1m0 1h1m-1 1h1m0 1h1m0 1h1m0 1h1m-1 1h1m0 1h1m0 -1h2m0 -1h1m0 -1h2m0 -1h1m0 -1h1m0 -1h1m0 -1h1m0 -1h1m0 -1h1m0 -1h1m0 -2h1m-1 1h1m0 -3h1m-1 1h1m0 -3h1m-1 1h1m0 -3h1m-1 1h1m0 -3h1m-1 1h1m0 -3h1m-1 1h1m0 -3h1m-1 1h1m0 -2h1m0 -2h1m-1 1h1m0 -2h1m0 -2h1m-1 1h1m0 -2h1m0 -1h1m0 -1h1m0 -2h1m-1 1h1m0 -2h1m0 -1h1m0 -2h1m-1 1h1m0 -3h1m-1 1h1m0 -4h1m-1 1h1m-1 1h1m0 -4h1m-1 1h1m0 -4h1m-1 1h1m-1 1h1m0 -4h1m-1 1h1m0 -3h2m-2 1h1m1 -2h3m0 -1h2m-1 1h1m0 1h1m-1 1h1m0 1h1m-1 1h1m0 1h1m-1 1h1m0 1h1m-1 1h1m0 1h1m-1 1h1m0 1h1m-1 1h1m0 1h1m-1 1h1m0 1h1m-1 1h1m0 1h1m0 1h1m-1 1h1m0 1h1m-1 1h1m0 1h1m0 1h1m-1 1h1m0 1h1m0 1h1m-1 1h1m0 1h1m0 1h1m-1 1h1m0 1h1m0 -2h1m-1 1h1m0 -2h1m0 -2h1m-1 1h1m0 -2h1m0 -2h1m-1 1h1m0 -3h1m-1 1h1m0 -4h1m-1 1h1m-1 1h1m0 -5h1m-1 1h1m-1 1h1m0 -4h1m-1 1h1m0 -4h1m-1 1h1m-1 1h1m0 -5h1m-1 1h1m-1 1h1m0 -4h1m-1 1h1m0 -3h1m-1 1h1m0 -3h1m-1 1h1m0 -3h1m-1 1h1m0 -3h1m-1 1h1m0 -3h1m-1 1h1m0 -3h1m-1 1h1m0 -3h1m-1 1h1m0 -3h1m-1 1h1m0 -2h1m0 -2h1m-1 1h1m0 -3h2m-2 1h2m-1 -2h1m0 3h1m-1 1h1m-1 1h1m-1 1h1m0 1h1m-1 1h1m-1 1h1m-1 1h1m0 1h1m-1 1h1m-1 1h1m-1 1h1m-1 1h1m0 1h1m-1 1h1m-1 1h1m-1 1h1m0 1h1m-1 1h1m-1 1h1m-1 1h1m0 1h1m-1 1h1m-1 1h1m-1 1h1m0 1h1m-1 1h1m0 1h1m-1 1h1m-1 1h1m0 1h1m-1 1h1m-1 1h1m0 1h1m-1 1h1m0 1h1m-1 1h1m-1 1h1m0 1h1m-1 1h1m0 1h1m0 1h1m0 1h1m-1 1h1m0 1h1m0 1h1m0 1h1m0 -2h1m-1 1h1m0 -2h1m0 -2h1m-1 1h1m0 -2h1m0 -2h1m-1 1h1m0 -2h1m0 -2h1m-1 1h1m0 -3h1m-1 1h1m0 -3h1m-1 1h1m0 -3h1m-1 1h1m0 -3h1m-1 1h1m0 -3h1m-1 1h1m0 -3h1m-1 1h1m0 -3h1m-1 1h1m0 -3h1m-1 1h1m0 -3h1m-1 1h1m0 -3h1m-1 1h1m0 -3h1m-1 1h1m0 -2h1m0 -1h1m0 -2h1m-1 1h1m0 -2h1m0 -1h1m0 -1h1m0 -1h1m0 -1h1m0 -1h1m0 -1h1m0 -1h1m0 -1h2m0 1h3m0 1h2m0 1h1m-1 1h1m0 1h1m-1 1h1m0 1h1m0 1h1m-1 1h1m0 1h1m-1 1h1m0 1h1m0 -2h1m-1 1h1m0 -3h1m-1 1h1m0 -3h1m-1 1h1m0 -3h1m-1 1h1m0 -3h1m-1 1h1" stroke="#e8e8e8"/>
<path d="M56 762.5h1m-1 1h1m-1 1h1m0 -7h1m-1 1h1m-1 1h1m-1 1h1m-1 1h1m0 -10h1m-1 1h1m-1 1h1m-1 1h1m-1 1h1m-1 1h1m0 -10h1m-1 1h1m-1 1h1m-1 1h1m-1 1h1m0 -9h1m-1 1h1m-1 1h1m-1 1h1m-1 1h1m0 -10h1m-1 1h1m-1 1h1m-1 1h1m-1 1h1m-1 1h1m0 -11h1m-1 1h1m-1 1h1m-1 1h1m-1 1h1m-1 1h1m0 -12h1m-1 1h1m-1 1h1m-1 1h1m-1 1h1m-1 1h1m-1 1h1m0 -13h1m-1 1h1m-1 1h1m-1 1h1m-1 1h1m-1 1h1m-1 1h1m0 -12h1m-1 1h1m-1 1h1m-1 1h1m-1 1h1m-1 1h1m0 -12h1m-1 1h1m-1 1h1m-1 1h1m-1 1h1m-1 1h1m-1 1h1m0 -13h1m-1 1h1m-1 1h1m-1 1h1m-1 1h1m-1 1h1m-1 1h1m0 -10h1m-1 1h1m-1 1h1m-1 1h1m0 -5h1m-1 1h1m0 -3h1m-1 1h1m0 -3h1m-1 1h1m0 -3h1m-1 1h1m0 -3h1m-1 1h1m0 -2h1m0 -1h2m0 -1h1m0 -1h2m0 -1h3m0 1h4m0 1h1m0 1h1m0 1h1m-1 1h1m0 1h1m0 1h1m0 1h1m0 -1h1m0 -1h1m0 -1h2m0 -1h1m0 -1h1m0 1h2m0 1h1m0 1h2m0 1h1m0 1h1m0 1h1m0 1h2m0 1h1m0 1h3m0 -1h4m0 1h1m0 1h1m0 1h1m-1 1h1m0 1h1m0 1h1m0 1h3m0 -1h6m0 -1h4m-1 1h1m-1 1h1m-1 1h1m0 1h1m-1 1h1m-1 1h1m-1 1h1m-1 1h1m-1 1h1m0 1h1m-1 1h1m-1 1h1m-1 1h1m-1 1h1m-1 1h1m-1 1h1m0 1h1m-1 1h1m-1 1h1m-1 1h1m-1 1h1m-1 1h1m-1 1h1m0 1h1m-1 1h1m-1 1h1m-1 1h1m-1 1h1m-1 1h1m0 1h1m-1 1h1m-1 1h1m-1 1h1m-1 1h1m-1 1h1m-1 1h1m0 1h1m-1 1h1m-1 1h1m-1 1h1m0 1h1m0 1h1m0 1h1m-1 1h1m0 1h1m0 1h1m0 1h1m0 -1h1m0 -1h1m0 -2h1m-1 1h1m0 -2h1m0 -1h2m-1 -1h1m-1 2h1m-1 1h1m0 1h1m-1 1h1m-1 1h1m-1 1h1m-1 1h1m-1 1h1m-1 1h1m0 1h1m-1 1h1m-1 1h1m-1 1h1m-1 1h1m-1 1h1m-1 1h1m0 1h1m-1 1h1m-1 1h1m-1 1h1m-1 1h1m-1 1h1m0 1h1m-1 1h1m-1 1h1m-1 1h1m-1 1h1m-1 1h1m-1 1h1m0 1h1m-1 1h1m-1 1h1m-1 1h1m-1 1h1m-1 1h1m-1 1h1m0 1h1m-1 1h1m-1 1h1m-1 1h1m0 1h1m0 1h1m0 1h2m0 1h1m0 1h1m0 -1h1m0 -1h1m0 -2h1m-1 1h1m0 -2h1m0 -1h2m-1 -1h1m0 2h1m-1 1h1m-1 1h1m0 1h1m-1 1h1m-1 1h1m0 1h1m-1 1h1m-1 1h1m0 1h1m-1 1h1m-1 1h1m0 1h1m-1 1h1m-1 1h1m0 1h1m-1 1h1m-1 1h1m0 1h1m-1 1h1m0 1h1m-1 1h1m0 1h1m-1 1h1m0 1h1m-1 1h1m0 1h1m-1 1h1m0 1h1m-1 1h1m0 1h2m0 1h1m0 1h2m0 1h1m0 -1h2m0 -1h2m0 -1h2m0 1h1m-1 1h1m0 1h1m-1 1h1m0 1h1m0 1h1m-1 1h1m0 1h1m-1 1h1m0 1h2m0 -1h3m0 -1h2m-1 -1h1m0 -2h1m-1 1h1m0 -3h1m-1 1h1m0 -3h1m-1 1h1m0 -3h1m-1 1h1m0 -3h1m-1 1h1m0 -3h1m-1 1h2m0 1h1m-1 1h1m0 1h1m0 1h1m0 1h1m-1 1h2m-1 1h1m0 -5h1m-1 1h1m-1 1h1m-1 1h1m0 -7h1m-1 1h1m-1 1h1m-1 1h1m0 -7h1m-1 1h1m-1 1h1m-1 1h1m0 -7h1m-1 1h1m-1 1h1m-1 1h1m0 -7h1m-1 1h1m-1 1h1m-1 1h1m0 -5h1m-1 1h1m0 -2h1m0 -1h1m0 -1h2m0 -1h1m0 -1h1m0 -1h2m0 -1h1m0 -1h2m0 -1h1m0 -1h2m0 -1h2m0 -1h2m-1 -1h1m0 -4h1m-1 1h1m-1 1h1m-1 1h1m0 -7h1m-1 1h1m-1 1h1m-1 1h1m0 -7h1m-1 1h1m-1 1h1m-1 1h1m0 -7h1m-1 1h1m-1 1h1m-1 1h1m0 -7h1m-1 1h1m-1 1h1m-1 1h1m0 -9h1m-1 1h1m-1 1h1m-1 1h1m-1 1h1m-1 1h1m0 -12h1m-1 1h1m-1 1h1m-1 1h1m-1 1h1m-1 1h1m-1 1h1m0 -13h1m-1 1h1m-1 1h1m-1 1h1m-1 1h1m-1 1h1m-1 1h1m0 -13h1m-1 1h1m-1 1h1m-1 1h1m-1 1h1m-1 1h1m-1 1h1m0 -13h1m-1 1h1m-1 1h1m-1 1h1m-1 1h1m-1 1h1m-1 1h1m0 -13h1m-1 1h1m-1 1h1m-1 1h1m-1 1h1m-1 1h1m-1 1h1m0 -10h1m-1 1h3m-3 1h1m-1 1h1m2 -1h2m0 1h2m-1 1h1m0 1h1m-1 1h1m0 1h1m-1 1h1m0 1h1m-1 1h1m0 1h1m-1 1h1m0 1h1m-1 1h1m0 1h1m-1 1h1m-1 1h1m0 1h1m-1 1h1m0 1h1m-1 1h1m-1 1h1m0 1h1m-1 1h1m-1 1h1m0 1h1m-1 1h1m0 1h1m-1 1h1m-1 1h1m0 1h1m-1 1h1m0 -3h1m-1 1h1m0 -3h1m-1 1h1m0 -4h1m-1 1h1m-1 1h1m0 -4h1m-1 1h1m0 -3h1m-1 1h1m0 -3h1m-1 1h1m0 -2h2m0 -1h1m0 -1h3m-1 -1h1m-1 2h1m0 1h1m-1 1h1m-1 1h1m-1 1h1m0 1h1m-1 1h1m-1 1h1m-1 1h1m0 1h1m-1 1h1m-1 1h1m-1 1h1m-1 1h1m0 1h1m-1 1h1m-1 1h1m-1 1h1m0 1h1m-1 1h1m-1 1h1m-1 1h1m0 1h1m-1 1h1m-1 1h1m-1 1h1m-1 1h1m-1 1h1m0 1h1m-1 1h1m-1 1h1m-1 1h1m-1 1h1m-1 1h1m-1 1h1m0 1h1m-1 1h1m-1 1h1m-1 1h1m-1 1h1m-1 1h1m-1 1h1m0 1h1m-1 1h1m-1 1h1m-1 1h1m-1 1h1m-1 1h1m-1 1h1m-1 1h1m0 1h1m-1 1h1m-1 1h1m-1 1h1m-1 1h1m-1 1h1m-1 1h1m0 1h1m-1 1h1m-1 1h1m-1 1h1m-1 1h1m-1 1h1m-1 1h1m0 1h1m-1 1h1m-1 1h1m-1 1h1m-1 1h1m0 1h1m-1 1h1m0 1h1m-1 1h1m-1 1h1m0 1h1m-1 1h1m-1 1h1m0 1h1m-1 1h1m0 1h1m-1 1h1m-1 1h1m0 1h2m-2 1h1m1 -2h1m0 -2h1m-1 1h1m0 -2h1m0 -1h1m0 -1h1m0 -2h1m-1 1h1m0 -2h1m0 -2h1m-1 1h1m0 -2h1m0 -2h1m-1 1h1m0 -2h1m0 1h1m0 1h1m0 1h2m0 1h1m0 1h3m0 1h4m-1 -1h1m0 -2h1m-1 1h1m0 -3h1m-1 1h1m0 -4h1m-1 1h1m-1 1h1m0 -4h1m-1 1h1m0 -3h1m-1 1h1m0 -4h1m-1 1h1m-1 1h1m0 -5h1m-1 1h1m-1 1h1m0 -6h1m-1 1h1m-1 1h1m-1 1h1m0 -6h1m-1 1h1m-1 1h1m0 -5h1m-1 1h1m-1 1h1m0 -6h1m-1 1h1m-1 1h1m-1 1h1m0 -5h1m-1 1h2m-1 1h1m0 1h1m-1 1h1m0 1h1m0 1h1m-1 1h1m0 1h2m-2 1h2m-1 1h1m0 -6h1m-1 1h1m-1 1h1m-1 1h1m0 -8h1m-1 1h1m-1 1h1m-1 1h1m-1 1h1m0 -9h1m-1 1h1m-1 1h1m-1 1h1m-1 1h1m0 -8h1m-1 1h1m-1 1h1m-1 1h1m0 -8h1m-1 1h1m-1 1h1m-1 1h1m-1 1h1m0 -7h7m-7 1h1m-1 1h1m5 -1h1m0 1h1m-1 1h1m-1 1h1m-1 1h1m0 1h1m-1 1h1m-1 1h1m0 1h1m-1 1h1m-1 1h1m-1 1h1m0 1h1m-1 1h1m-1 1h1m0 1h1m-1 1h1m-1 1h1m-1 1h1m0 1h1m-1 1h1m-1 1h1m0 1h1m-1 1h1m-1 1h1m-1 1h1m0 1h1m-1 1h1m-1 1h1m-1 1h1m0 1h1m-1 1h1m-1 1h1m-1 1h1m0 1h1m-1 1h1m-1 1h1m-1 1h1m0 1h1m-1 1h1m-1 1h1m-1 1h1m0 1h1m-1 1h1m-1 1h1m0 1h1m-1 1h1m0 1h1m-1 1h1m-1 1h1m0 1h1m-1 1h1m0 1h1m-1 1h1m-1 1h1m0 1h1m-1 1h1m0 1h1m-1 1h1m0 1h1m0 1h1m0 1h2m0 1h1m0 1h1m0 -1h1m0 -1h1m0 -2h1m-1 1h1m0 -2h1m0 -1h1m0 -1h2m0 1h3m0 1h2m0 -1h2m0 -1h1m0 -1h2m0 -1h1m0 -1h1m0 -1h1m0 -2h1m-1 1h1m0 -2h1m0 -1h1m0 -1h1m0 1h1m0 1h1m0 1h1m0 1h1m0 1h1m0 1h7m-1 -1h1m0 -3h1m-1 1h1m-1 1h1m0 -5h1m-1 1h1m-1 1h1m0 -6h1m-1 1h1m-1 1h1m-1 1h1m0 -6h1m-1 1h1m-1 1h1m0 -5h1m-1 1h1m-1 1h1m0 -4h7m-7 1h1m6 0h1m-1 1h1m0 1h1m0 1h1m-1 1h1m0 1h1m0 1h1m-1 1h1m0 1h1m0 1h1m-1 1h1m0 1h1m-1 1h1m0 1h1m0 1h1m-1 1h1m0 1h1m-1 1h1m0 1h1m0 -1h1m0 -2h1m-1 1h1m0 -2h1m0 -1h1m0 -2h1m-1 1h1m0 -2h1m0 1h2m0 1h2m0 1h2m0 1h2m0 1h1m0 1h2m0 1h2m0 -1h3m0 -1h2m0 1h1m0 1h1m0 1h2m0 1h1m0 1h3m0 1h4m0 -1h2m0 -1h2m0 -1h2m0 -1h2m0 -1h2m0 -1h2m-1 -2h1m-1 1h1m0 -7h1m-1 1h1m-1 1h1m-1 1h1m-1 1h1m-1 1h1m0 -11h1m-1 1h1m-1 1h1m-1 1h1m-1 1h1m-1 1h1m0 -11h1m-1 1h1m-1 1h1m-1 1h1m-1 1h1m-1 1h1m0 -11h1m-1 1h1m-1 1h1m-1 1h1m-1 1h1m-1 1h1m0 -11h1m-1 1h1m-1 1h1m-1 1h1m-1 1h1m-1 1h1m0 -8h1m-1 1h1m-1 1h2m-1 1h1m-1 1h1m0 1h1m-1 1h1m-1 1h1m0 1h1m-1 1h1m-1 1h1m-1 1h1m0 1h1m-1 1h1m-1 1h1m0 1h1m-1 1h1m-1 1h1m0 1h2m-2 1h1m1 -2h1m0 -2h1m-1 1h1m0 -2h1m0 -1h1m0 -3h1m-1 1h1m-1 1h1m0 -7h1m-1 1h1m-1 1h1m-1 1h1m-1 1h1m0 -9h1m-1 1h1m-1 1h1m-1 1h1m-1 1h1m0 -9h1m-1 1h1m-1 1h1m-1 1h1m-1 1h1m0 -9h1m-1 1h1m-1 1h1m-1 1h1m-1 1h1m0 -9h1m-1 1h1m-1 1h1m-1 1h1m-1 1h1m0 -9h1m-1 1h1m-1 1h1m-1 1h1m-1 1h1m0 -10h1m-1 1h1m-1 1h1m-1 1h1m-1 1h1m-1 1h1m0 -11h1m-1 1h1m-1 1h1m-1 1h1m-1 1h1m-1 1h1m0 -11h1m-1 1h1m-1 1h1m-1 1h1m-1 1h1m-1 1h1m0 -11h1m-1 1h1m-1 1h1m-1 1h1m-1 1h1m-1 1h1m0 -11h1m-1 1h1m-1 1h1m-1 1h1m-1 1h1m-1 1h1m0 -10h1m-1 1h1m-1 1h1m-1 1h1m-1 1h1m0 -7h1m-1 1h1m-1 1h1m0 -6h1m-1 1h1m-1 1h1m-1 1h1m0 -6h1m-1 1h1m-1 1h1m0 -5h1m-1 1h1m-1 1h1m0 -6h1m-1 1h1m-1 1h1m-1 1h1m0 -6h1m-1 1h1m-1 1h1m0 -4h1m-1 1h1m0 -3h1m-1 1h1m0 -4h1m-1 1h1m-1 1h1m0 -4h1m-1 1h1m0 -3h1m-1 1h1m0 -3h3m-3 1h1m2 0h4m0 1h1m0 1h1m0 1h1m0 1h1m0 1h1m0 1h7m0 -1h1m0 -1h1m0 -1h2m0 -1h2m-1 -1h1m0 2h1m-1 1h1m-1 1h1m-1 1h1m0 1h1m-1 1h1m-1 1h1m0 1h1m-1 1h1m-1 1h1m-1 1h1m0 1h1m-1 1h1m-1 1h1m0 1h1m-1 1h1m-1 1h1m-1 1h1m0 1h1m-1 1h1m0 1h2m0 1h2m0 1h2m0 -1h2m0 -1h2m0 -1h2m-1 1h1m-1 1h1m-1 1h1m-1 1h1m0 1h1m-1 1h1m-1 1h1m-1 1h1m-1 1h1m-1 1h1m-1 1h1m-1 1h1m-1 1h1m0 1h1m-1 1h1m-1 1h1m-1 1h1m-1 1h1m-1 1h1m-1 1h1m-1 1h1m-1 1h1m0 1h1m-1 1h1m-1 1h1m-1 1h1m-1 1h1m-1 1h1m-1 1h1m-1 1h1m-1 1h1m-1 1h1m0 1h1m-1 1h1m-1 1h1m-1 1h1m-1 1h1m-1 1h1m-1 1h1m-1 1h1m-1 1h1m0 1h1m-1 1h1m-1 1h1m-1 1h1m-1 1h1m-1 1h1m-1 1h1m-1 1h1m-1 1h1m0 1h1m-1 1h1m-1 1h1m-1 1h1m-1 1h1m0 1h1m-1 1h1m0 1h1m-1 1h1m0 1h1m0 1h1m-1 1h1m0 1h1m-1 1h1m0 1h1m-1 1h1m-1 1h1m0 1h1m-1 1h1m-1 1h1m-1 1h1m0 1h1m-1 1h1m-1 1h1m-1 1h1m-1 1h1m0 1h1m-1 1h1m-1 1h1m-1 1h1m-1 1h1m0 1h1m-1 1h1m-1 1h1m-1 1h1m0 1h1m-1 1h1m-1 1h1m-1 1h1m-1 1h1m0 1h1m-1 1h1m-1 1h1m-1 1h1m-1 1h1m0 1h1m-1 1h1m-1 1h1m-1 1h1m-1 1h1m0 1h1m-1 1h1m-1 1h1m-1 1h1m-1 1h1m0 1h1m-1 1h1m-1 1h1m-1 1h1m-1 1h1m0 1h1m-1 1h1m-1 1h1m-1 1h1m-1 1h1m0 1h1m-1 1h1m-1 1h1m-1 1h1m-1 1h1m0 1h1m-1 1h1m-1 1h2m0 -1h3m0 -1h4m0 1h4m0 1h2m0 1h1m0 1h2m0 1h1m0 -1h2m0 -1h1m0 -1h2m0 -2h1m-1 1h1m0 -4h1m-1 1h1m-1 1h1m0 -5h1m-1 1h1m-1 1h1m0 -5h1m-1 1h1m-1 1h1m0 -5h1m-1 1h1m-1 1h1m0 -5h1m-1 1h1m-1 1h1m0 -5h1m-1 1h1m-1 1h1m0 -5h1m-1 1h1m-1 1h1m0 -6h1m-1 1h1m-1 1h1m-1 1h1m0 -6h1m-1 1h1m-1 1h1m0 -5h1m-1 1h1m-1 1h1m0 -6h1m-1 1h1m-1 1h1m-1 1h1m0 -8h1m-1 1h1m-1 1h1m-1 1h1m-1 1h1m0 -11h1m-1 1h1m-1 1h1m-1 1h1m-1 1h1m-1 1h1m-1 1h1m0 -13h1m-1 1h1m-1 1h1m-1 1h1m-1 1h1m-1 1h1m-1 1h1m0 -14h1m-1 1h1m-1 1h1m-1 1h1m-1 1h1m-1 1h1m-1 1h1m-1 1h1m0 -14h1m-1 1h1m-1 1h1m-1 1h1m-1 1h1m-1 1h1m-1 1h1m0 -13h1m-1 1h1m-1 1h1m-1 1h1m-1 1h1m-1 1h1m-1 1h1m0 -10h1m-1 1h1m-1 1h1m-1 1h2m-1 1h1m-1 1h1m-1 1h1m0 1h1m-1 1h1m-1 1h1m-1 1h1m-1 1h1m0 1h1m-1 1h1m-1 1h1m-1 1h1m0 1h1m-1 1h1m-1 1h1m-1 1h1m-1 1h1m0 1h1m-1 1h1m-1 1h1m-1 1h1m0 1h1m-1 1h1m-1 1h1m0 1h1m-1 1h1m0 1h1m-1 1h1m0 1h1m-1 1h1m0 1h1m-1 1h1m0 1h1m-1 1h1m0 1h1m0 1h2m0 1h1m0 1h2m0 1h1m0 1h1m-1 1h1m0 1h1m-1 1h1m0 1h1m-1 1h1m0 1h1m-1 1h1m0 1h1m-1 1h1m0 1h3m0 1h4m-1 1h1m0 1h1m-1 1h1m0 1h1m-1 1h1m0 1h1m-1 1h1m-1 1h1m0 1h1m-1 1h1m0 1h1m-1 1h1m0 1h2m-2 1h1m1 -3h1m-1 1h1m0 -2h1m0 -1h1m0 -2h1m-1 1h1m0 -2h1m0 1h2m0 1h2m0 1h2m-1 -1h1m0 -2h1m-1 1h1m0 -3h1m-1 1h1m0 -3h1m-1 1h1m0 -3h1m-1 1h1m0 -3h1m-1 1h1m0 -3h1m-1 1h1m0 -3h1m-1 1h1m0 -3h1m-1 1h1m0 -2h1m0 -2h1m-1 1h1m0 -3h1m-1 1h1m0 -2h1m0 -1h1m0 -1h1m0 -1h1m0 -1h1m0 -1h1m0 -1h1m0 -2h1m-1 1h1m0 -3h1m-1 1h1m0 -2h1m0 -2h1m-1 1h1m0 -3h1m-1 1h1m0 -4h1m-1 1h1m-1 1h1m0 -7h1m-1 1h1m-1 1h1m-1 1h1m-1 1h1m0 -10h1m-1 1h1m-1 1h1m-1 1h1m-1 1h1m-1 1h1m0 -10h1m-1 1h1m-1 1h1m-1 1h1m-1 1h1m0 -9h1m-1 1h1m-1 1h1m-1 1h1m-1 1h1m0 -10h1m-1 1h1m-1 1h1m-1 1h1m-1 1h1m-1 1h1m0 -10h1m-1 1h1m-1 1h1m-1 1h1m-1 1h1m0 -9h1m-1 1h1m-1 1h1m-1 1h1m-1 1h1m0 -9h1m-1 1h1m-1 1h1m-1 1h1m-1 1h1m0 -8h1m-1 1h1m-1 1h1m-1 1h1m0 -8h1m-1 1h1m-1 1h1m-1 1h1m-1 1h1m0 -9h1m-1 1h1m-1 1h1m-1 1h1m-1 1h1m0 -7h1m-1 1h1m-1 1h1m0 -4h1m-1 1h1m0 -2h1m0 -2h1m-1 1h1m0 -2h1m0 -2h1m-1 1h1m0 -2h3m0 -1h4m0 -1h2m0 -1h2m0 -1h2m0 -1h1m0 -1h1m0 -1h1m0 -1h1m0 -1h1m0 -1h1m0 1h1m-1 1h1m0 1h1m-1 1h1m0 1h1m-1 1h1m0 1h1m-1 1h1m0 1h1m-1 1h1m0 1h2m-2 1h1m0 -2h1m0 -2h1m-1 1h1m0 -3h1m-1 1h1m0 -3h1m-1 1h1m0 -3h2m-2 1h1m0 -2h1m0 2h1m-1 1h1m-1 1h1m0 1h1m-1 1h1m-1 1h1m0 1h1m-1 1h1m-1 1h1m-1 1h1m0 1h1m-1 1h1m-1 1h1m0 1h1m-1 1h1m-1 1h1m0 1h1m-1 1h3m0 1h4m0 -1h1m0 -2h1m-1 1h1m0 -2h1m0 -1h1m0 -2h1m-1 1h1m0 -2h1m0 1h1m0 1h1m0 1h1m-1 1h1m0 1h1m0 1h1m0 1h1m0 1h1m0 1h1m-1 1h1m0 1h1m0 1h1m0 1h1m-1 1h1m0 1h1m0 -1h1m0 -1h1m0 -2h1m-1 1h1m0 -2h1m0 -1h1m0 -1h1m0 1h1m-1 1h1m0 1h1m0 1h1m-1 1h1m0 1h1m0 1h1m-1 1h1m0 1h7m-1 1h1m0 1h1m-1 1h1m-1 1h1m-1 1h1m0 1h1m-1 1h1m-1 1h1m-1 1h1m0 1h1m-1 1h1m-1 1h1m-1 1h1m0 1h1m-1 1h1m-1 1h1m-1 1h1m0 1h1m-1 1h1m-1 1h1m-1 1h1m0 1h1m-1 1h1m-1 1h1m-1 1h1m-1 1h1m0 1h1m-1 1h1m-1 1h1m-1 1h1m-1 1h1m-1 1h1m-1 1h1m0 1h1m-1 1h1m-1 1h1m-1 1h1m-1 1h1m-1 1h1m-1 1h1m0 1h1m-1 1h1m-1 1h1m-1 1h1m-1 1h1m-1 1h1m0 1h1m-1 1h1m-1 1h1m-1 1h1m-1 1h1m-1 1h1m-1 1h1m0 1h1m-1 1h1m-1 1h1m-1 1h1m-1 1h1m-1 1h1m-1 1h1m0 1h1m-1 1h1m-1 1h1m-1 1h1m-1 1h1m0 1h1m-1 1h1m0 1h1m-1 1h1m0 1h1m-1 1h1m-1 1h1m0 1h1m-1 1h1m0 1h1m-1 1h1m0 1h1m-1 1h1m0 1h1m-1 1h1m0 1h1m-1 1h1m0 1h1m-1 1h1m0 1h1m-1 1h1m0 1h1m-1 1h2m-1 1h1m0 -5h1m-1 1h1m-1 1h1m-1 1h1m0 -7h1m-1 1h1m-1 1h1m-1 1h1m0 -7h1m-1 1h1m-1 1h1m-1 1h1m0 -7h1m-1 1h1m-1 1h1m-1 1h1m0 -7h1m-1 1h1m-1 1h1m-1 1h1m0 -6h1m-1 1h1m-1 1h1m0 -5h1m-1 1h1m-1 1h1m0 -5h1m-1 1h1m-1 1h1m0 -6h1m-1 1h1m-1 1h1m-1 1h1m0 -6h1m-1 1h1m-1 1h1m0 -5h1m-1 1h1m-1 1h1m0 -4h1m-1 1h1m0 1h1m-1 1h1m-1 1h1m-1 1h1m0 1h1m-1 1h1m-1 1h1m0 1h1m-1 1h1m-1 1h1m-1 1h1m0 1h1m-1 1h1m-1 1h1m0 1h1m-1 1h1m-1 1h1m-1 1h1m0 1h1m-1 1h2m0 -1h3m0 -1h2m-1 -5h1m-1 1h1m-1 1h1m-1 1h1m-1 1h1m0 -14h1m-1 1h1m-1 1h1m-1 1h1m-1 1h1m-1 1h1m-1 1h1m-1 1h1m-1 1h1m-1 1h1m0 -19h1m-1 1h1m-1 1h1m-1 1h1m-1 1h1m-1 1h1m-1 1h1m-1 1h1m-1 1h1m-1 1h1m0 -19h1m-1 1h1m-1 1h1m-1 1h1m-1 1h1m-1 1h1m-1 1h1m-1 1h1m-1 1h1m-1 1h1m0 -19h1m-1 1h1m-1 1h1m-1 1h1m-1 1h1m-1 1h1m-1 1h1m-1 1h1m-1 1h1m-1 1h1m0 -19h1m-1 1h1m-1 1h1m-1 1h1m-1 1h1m-1 1h1m-1 1h1m-1 1h1m-1 1h1m-1 1h1m0 -17h1m-1 1h1m-1 1h1m-1 1h1m-1 1h1m-1 1h1m-1 1h1m-1 1h1m0 -11h1m-1 1h1m-1 1h1m-1 1h1m0 -7h1m-1 1h1m-1 1h1m-1 1h1m0 -7h1m-1 1h1m-1 1h1m-1 1h1m0 -7h1m-1 1h1m-1 1h1m-1 1h1m0 -7h1m-1 1h1m-1 1h1m-1 1h1m0 -6h1m-1 1h1m-1 1h1m0 -4h1m-1 1h1m0 -3h1m-1 1h1m0 -2h1m0 -2h1m-1 1h1m0 -3h1m-1 1h1m0 -2h1m0 -1h2m0 -1h2m0 -1h2m0 -1h2m0 -1h2m0 -1h2m-1 1h1m0 1h1m-1 1h1m-1 1h1m0 1h1m-1 1h1m-1 1h1m0 1h1m-1 1h1m0 1h1m-1 1h1m-1 1h1m0 1h1m-1 1h1m-1 1h1m0 1h1m-1 1h1m0 1h1m0 1h1m-1 1h1m0 1h1m0 1h1m0 1h1m-1 1h1m0 1h1m0 -1h1m0 -1h1m0 -1h1m0 -1h1m0 -1h1m0 -1h1m0 1h2m0 1h2m0 1h2m-1 1h1m0 1h1m-1 1h1m-1 1h1m-1 1h1m0 1h1m-1 1h1m-1 1h1m-1 1h1m0 1h1m-1 1h1m-1 1h1m0 1h1m-1 1h1m-1 1h1m-1 1h1m0 1h1m-1 1h1m-1 1h1m-1 1h1m0 1h1m-1 1h1m-1 1h1m-1 1h1m0 1h1m-1 1h1m-1 1h1m-1 1h1m-1 1h1m0 1h1m-1 1h1m-1 1h1m-1 1h1m-1 1h1m0 1h1m-1 1h1m-1 1h1m-1 1h1m-1 1h1m0 1h1m-1 1h1m-1 1h1m-1 1h1m-1 1h1m0 1h1m-1 1h1m-1 1h1m-1 1h1m-1 1h1m0 1h1m-1 1h1m-1 1h1m-1 1h1m-1 1h1m0 1h1m-1 1h1m-1 1h1m-1 1h1m-1 1h1m0 1h1m-1 1h1m-1 1h1m-1 1h1m-1 1h1m-1 1h1m0 1h1m-1 1h1m-1 1h1m-1 1h1m-1 1h1m0 1h1m-1 1h1m-1 1h1m-1 1h1m-1 1h1m0 1h1m-1 1h1m-1 1h1m-1 1h1m-1 1h1m-1 1h1m0 1h1m-1 1h1m-1 1h1m0 1h1m0 1h1m0 1h2m0 1h1m0 1h1m-1 1h1m0 1h1m-1 1h1m-1 1h1m-1 1h1m0 1h1m-1 1h1m-1 1h1m0 1h1m-1 1h1m-1 1h1m-1 1h1m0 1h1m-1 1h1m-1 1h1m0 1h1m-1 1h1m-1 1h1m-1 1h1m0 1h1m-1 1h1m-1 1h1m0 1h1m-1 1h1m0 1h1m-1 1h1m0 1h1m-1 1h1m0 1h1m-1 1h1m0 1h1m-1 1h1m0 1h1m-1 1h1m0 1h2m0 1h1m0 1h3m-1 1h1m0 -5h1m-1 1h1m-1 1h1m-1 1h1m0 -7h1m-1 1h1m-1 1h1m-1 1h1m0 -7h1m-1 1h1m-1 1h1m-1 1h1m0 -7h1m-1 1h1m-1 1h1m-1 1h1m0 -7h1m-1 1h1m-1 1h1m-1 1h1m0 -6h1m-1 1h1m-1 1h1m0 -6h1m-1 1h1m-1 1h1m-1 1h1m0 -6h1m-1 1h1m-1 1h1m0 -6h1m-1 1h1m-1 1h1m-1 1h1m0 -6h1m-1 1h1m-1 1h1m0 -6h1m-1 1h1m-1 1h1m-1 1h1m0 -7h1m-1 1h1m-1 1h1m-1 1h1m0 -8h1m-1 1h1m-1 1h1m-1 1h1m-1 1h1m0 -9h1m-1 1h1m-1 1h1m-1 1h1m-1 1h1m0 -10h1m-1 1h1m-1 1h1m-1 1h1m-1 1h1m-1 1h1m0 -10h1m-1 1h1m-1 1h1m-1 1h1m-1 1h1m0 -9h1m-1 1h1m-1 1h1m-1 1h1m-1 1h1m0 -8h1m-1 1h1m-1 1h1m-1 1h1m0 -6h1m-1 1h1m-1 1h1m0 -5h1m-1 1h1m-1 1h1m0 -4h1m-1 1h1m0 -4h1m-1 1h1m-1 1h1m0 -5h1m-1 1h1m-1 1h1m0 -4h1m-1 1h1m0 -2h1m0 -2h1m-1 1h1m0 -2h1m0 -1h1m0 -2h1m-1 1h1m0 -4h1m-1 1h1m-1 1h1m0 -6h1m-1 1h1m-1 1h1m-1 1h1m0 -8h1m-1 1h1m-1 1h1m-1 1h1m-1 1h1m0 -8h1m-1 1h1m-1 1h1m-1 1h1m0 -8h1m-1 1h1m-1 1h1m-1 1h1m-1 1h1m0 -8h1m-1 1h1m-1 1h1m-1 1h1m0 -6h1m-1 1h2m-2 1h1m1 0h1m0 1h1m0 1h1m0 1h1m0 1h1m-1 1h1m-1 1h1m-1 1h1m0 1h1m-1 1h1m-1 1h1m-1 1h1m-1 1h1m-1 1h1m0 1h1m-1 1h1m-1 1h1m-1 1h1m-1 1h1m-1 1h1m-1 1h1m0 1h1m-1 1h1m-1 1h1m-1 1h1m-1 1h1m-1 1h1m0 1h1m-1 1h1m-1 1h1m-1 1h1m-1 1h1m-1 1h1m-1 1h1m0 1h1m-1 1h1m-1 1h1m-1 1h1m-1 1h1m-1 1h1m0 1h1m-1 1h1m-1 1h1m-1 1h1m-1 1h1m0 1h1m-1 1h1m-1 1h1m-1 1h1m0 1h1m-1 1h1m-1 1h1m-1 1h1m0 1h1m-1 1h1m-1 1h1m-1 1h1m0 1h1m-1 1h1m-1 1h1m-1 1h1m0 1h1m-1 1h1m-1 1h1m-1 1h1m0 1h1m-1 1h1m-1 1h1m-1 1h1m0 1h1m-1 1h1m0 1h1m-1 1h1m-1 1h1m0 1h1m-1 1h1m-1 1h1m0 1h1m-1 1h1m0 1h1m-1 1h1m-1 1h2m-1 1h1m-1 1h1m0 -7h1m-1 1h1m-1 1h1m-1 1h1m-1 1h1m0 -9h1m-1 1h1m-1 1h1m-1 1h1m-1 1h1m0 -8h1m-1 1h1m-1 1h1m-1 1h1m0 -8h1m-1 1h1m-1 1h1m-1 1h1m-1 1h1m0 -9h1m-1 1h1m-1 1h1m-1 1h1m-1 1h1m0 -10h1m-1 1h1m-1 1h1m-1 1h1m-1 1h1m-1 1h1m0 -11h1m-1 1h1m-1 1h1m-1 1h1m-1 1h1m-1 1h1m0 -11h1m-1 1h1m-1 1h1m-1 1h1m-1 1h1m-1 1h1m0 -12h1m-1 1h1m-1 1h1m-1 1h1m-1 1h1m-1 1h1m-1 1h1m0 -12h1m-1 1h1m-1 1h1m-1 1h1m-1 1h1m-1 1h1m0 -11h1m-1 1h1m-1 1h1m-1 1h1m-1 1h1m-1 1h1m0 -10h1m-1 1h1m-1 1h1m-1 1h1m-1 1h1m0 -8h1m-1 1h1m-1 1h1m-1 1h1m0 -7h1m-1 1h1m-1 1h1m-1 1h1m0 -7h1m-1 1h1m-1 1h1m-1 1h1m0 -7h1m-1 1h1m-1 1h1m-1 1h1m0 -7h1m-1 1h1m-1 1h1m-1 1h1m0 -6h1m-1 1h1m-1 1h1m0 -4h1m-1 1h1m0 -3h1m-1 1h1m0 -3h1m-1 1h1m0 -3h1m-1 1h1m0 -3h2m-2 1h2m-1 -3h1m-1 1h1m-1 3h1m-1 1h1m0 1h1m-1 1h1m-1 1h1m-1 1h1m-1 1h1m-1 1h1m-1 1h1m-1 1h1m-1 1h1m-1 1h1m-1 1h1m-1 1h1m0 1h1m-1 1h1m-1 1h1m-1 1h1m-1 1h1m-1 1h1m-1 1h1m-1 1h1m-1 1h1m-1 1h1m-1 1h1m-1 1h1m0 1h1m-1 1h1m-1 1h1m-1 1h1m-1 1h1m-1 1h1m-1 1h1m-1 1h1m-1 1h1m-1 1h1m-1 1h1m-1 1h1m0 1h1m-1 1h1m-1 1h1m-1 1h1m-1 1h1m-1 1h1m-1 1h1m-1 1h1m-1 1h1m-1 1h1m-1 1h1m-1 1h1m0 1h1m-1 1h1m-1 1h1m-1 1h1m-1 1h1m-1 1h1m-1 1h1m-1 1h1m-1 1h1m-1 1h1m-1 1h1m-1 1h1m0 1h1m-1 1h1m-1 1h1m-1 1h1m-1 1h1m-1 1h1m-1 1h1m-1 1h1m0 1h1m-1 1h1m-1 1h1m-1 1h1m-1 1h1m-1 1h1m0 1h1m-1 1h1m-1 1h1m-1 1h1m-1 1h1m-1 1h1m0 1h1m-1 1h1m-1 1h1m-1 1h1m-1 1h1m0 1h1m-1 1h1m-1 1h1m-1 1h1m-1 1h1m-1 1h1m0 1h1m-1 1h1m-1 1h1m-1 1h1m-1 1h1m-1 1h1m0 1h1m-1 1h1m-1 1h1m0 1h1m0 1h1m0 1h1m0 1h1m0 1h2m-1 -1h1m-1 2h1m0 -7h1m-1 1h1m-1 1h1m-1 1h1m-1 1h1m0 -9h1m-1 1h1m-1 1h1m-1 1h1m-1 1h1m0 -8h1m-1 1h1m-1 1h1m-1 1h1m0 -8h1m-1 1h1m-1 1h1m-1 1h1m-1 1h1m0 -9h1m-1 1h1m-1 1h1m-1 1h1m-1 1h1m0 -9h1m-1 1h1m-1 1h1m-1 1h1m-1 1h1m0 -9h1m-1 1h1m-1 1h1m-1 1h1m-1 1h1m0 -9h1m-1 1h1m-1 1h1m-1 1h1m-1 1h1m0 -10h1m-1 1h1m-1 1h1m-1 1h1m-1 1h1m-1 1h1m0 -10h1m-1 1h1m-1 1h1m-1 1h1m-1 1h1m0 -9h1m-1 1h1m-1 1h1m-1 1h1m-1 1h1m0 -9h1m-1 1h1m-1 1h1m-1 1h1m-1 1h1m0 -8h1m-1 1h1m-1 1h1m-1 1h1m0 -7h1m-1 1h1m-1 1h1m-1 1h1m0 -7h1m-1 1h1m-1 1h1m-1 1h1m0 -7h1m-1 1h1m-1 1h1m-1 1h1m0 -7h1m-1 1h1m-1 1h1m-1 1h1m0 -6h1m-1 1h1m-1 1h1m0 -3h1m0 -1h1m0 -2h1m-1 1h1m0 -2h1m0 -1h1m0 -1h1m0 -1h1m0 -1h1m0 -1h2m0 -1h1m0 -1h1m0 1h1m-1 1h1m0 1h1m-1 1h1m0 1h1m-1 1h1m0 1h1m-1 1h1m0 1h1m-1 1h1m0 1h1m-1 1h1m-1 1h1m-1 1h1m0 1h1m-1 1h1m-1 1h1m-1 1h1m0 1h1m-1 1h1m-1 1h1m-1 1h1m-1 1h1m0 1h1m-1 1h1m-1 1h1m-1 1h1m0 1h1m-1 1h1m-1 1h1m-1 1h1m-1 1h1m0 1h1m-1 1h1m-1 1h1m-1 1h1m0 1h1m-1 1h1m-1 1h1m0 -6h1m-1 1h1m-1 1h1m-1 1h1m0 -8h1m-1 1h1m-1 1h1m-1 1h1m-1 1h1m0 -8h1m-1 1h1m-1 1h1m-1 1h1m0 -8h1m-1 1h1m-1 1h1m-1 1h1m-1 1h1m0 -8h1m-1 1h1m-1 1h1m-1 1h1m0 -5h1m-1 1h1" stroke="#ff00ff"/>
</g>
<g fill="#d0d0d0" shape-rendering="crispEdges">
<rect x="7" y="4" width="6" height="1"/><rect x="7" y="4" width="1" height="5"/><rect x="7" y="8" width="6" height="1"/>
<rect x="17" y="4" width="6" height="1"/><rect x="22" y="4" width="1" height="5"/><rect x="17" y="8" width="6" height="1"/>
</g>
<path d="M11.5 1.5 L18 11" stroke="#c0c0c0" stroke-width="1" fill="none"/>
<text x="27.5" y="11" fill="#e0e0e0" text-anchor="start" style="font-size:12px"  textLength="48" lengthAdjust="spacingAndGlyphs">美元加元</text>
<text x="79" y="11" fill="#e0e0e0" text-anchor="start" style="font-size:12px"  textLength="98" lengthAdjust="spacingAndGlyphs">(外汇_D 8159)日线</text>
<text x="58.6" y="28" fill="#ffff00" text-anchor="start" style="font-size:12px"  textLength="79.8" lengthAdjust="spacingAndGlyphs">BOLL(26,26,2)</text>
<text x="147" y="28" fill="#e8e8e8" text-anchor="start" style="font-size:12px"  textLength="20.5" lengthAdjust="spacingAndGlyphs">MID</text>
<text x="180" y="28" fill="#e8e8e8" text-anchor="start" style="font-size:12px"  textLength="38.5" lengthAdjust="spacingAndGlyphs">1.2778</text>
<text x="238.6" y="28" fill="#ffff00" text-anchor="start" style="font-size:12px"  textLength="21.7" lengthAdjust="spacingAndGlyphs">TOP</text>
<text x="273.5" y="28" fill="#ffff00" text-anchor="start" style="font-size:12px"  textLength="38" lengthAdjust="spacingAndGlyphs">1.2913</text>
<text x="330" y="28" fill="#ff00ff" text-anchor="start" style="font-size:12px"  textLength="49.7" lengthAdjust="spacingAndGlyphs">BOTTOM</text>
<text x="392" y="28" fill="#ff00ff" text-anchor="start" style="font-size:12px"  textLength="38.5" lengthAdjust="spacingAndGlyphs">1.2643</text>
<text x="58.75" y="483" fill="#ffff00" text-anchor="start" style="font-size:12px"  textLength="83.75" lengthAdjust="spacingAndGlyphs">MACD(12,26,9)</text>
<text x="151" y="483" fill="#e8e8e8" text-anchor="start" style="font-size:12px"  textLength="24" lengthAdjust="spacingAndGlyphs">DIFF</text>
<text x="187" y="483" fill="#e8e8e8" text-anchor="start" style="font-size:12px"  textLength="38" lengthAdjust="spacingAndGlyphs">0.0033</text>
<text x="243.75" y="483" fill="#ffff00" text-anchor="start" style="font-size:12px"  textLength="22.5" lengthAdjust="spacingAndGlyphs">DEA</text>
<text x="279.5" y="483" fill="#ffff00" text-anchor="start" style="font-size:12px"  textLength="37.5" lengthAdjust="spacingAndGlyphs">0.0033</text>
<text x="348.75" y="483" fill="#e8e8e8" text-anchor="start" style="font-size:12px"  textLength="37.5" lengthAdjust="spacingAndGlyphs">0.0001</text>
<text x="58.75" y="663" fill="#ffff00" text-anchor="start" style="font-size:12px"  textLength="58.25" lengthAdjust="spacingAndGlyphs">KDJ(9,3,3)</text>
<text x="125" y="663" fill="#e8e8e8" text-anchor="start" style="font-size:12px" >K</text>
<text x="143.75" y="663" fill="#e8e8e8" text-anchor="start" style="font-size:12px"  textLength="45" lengthAdjust="spacingAndGlyphs">75.5392</text>
<text x="208" y="663" fill="#ffff00" text-anchor="start" style="font-size:12px" >D</text>
<text x="228" y="663" fill="#ffff00" text-anchor="start" style="font-size:12px"  textLength="44.5" lengthAdjust="spacingAndGlyphs">70.2437</text>
<text x="292" y="663" fill="#ff00ff" text-anchor="start" style="font-size:12px" >J</text>
<text x="308.75" y="663" fill="#ff00ff" text-anchor="start" style="font-size:12px"  textLength="45" lengthAdjust="spacingAndGlyphs">86.1302</text>
<text x="50" y="237" fill="#b4b4b4" text-anchor="end" style="font-size:12px" >1.3000</text>
<text x="50" y="353" fill="#b4b4b4" text-anchor="end" style="font-size:12px" >1.2500</text>
<text x="50" y="552" fill="#b4b4b4" text-anchor="end" style="font-size:12px" >0.0000</text>
<text x="50" y="604" fill="#b4b4b4" text-anchor="end" style="font-size:12px" >-0.0100</text>
<text x="50" y="689" fill="#b4b4b4" text-anchor="end" style="font-size:12px" >100</text>
<text x="50" y="713" fill="#b4b4b4" text-anchor="end" style="font-size:12px" >80</text>
<text x="50" y="749" fill="#b4b4b4" text-anchor="end" style="font-size:12px" >50</text>
<text x="50" y="784" fill="#b4b4b4" text-anchor="end" style="font-size:12px" >20</text>
<text x="50" y="808" fill="#b4b4b4" text-anchor="end" style="font-size:12px" >0</text>
<text x="120" y="43" fill="#ff3c3c" text-anchor="start" style="font-size:12px" >1.3792</text>
<text x="54" y="185" fill="#00ffff" text-anchor="start" style="font-size:12px" >260</text>
<text x="870" y="247" fill="#ff3c3c" text-anchor="start" style="font-size:12px" >1.2916</text>
<text x="660" y="465" fill="#00ffff" text-anchor="start" style="font-size:12px" >1.2057</text>
<text x="1032" y="334" fill="#00ffff" text-anchor="start" style="font-size:12px" >1.2620</text>
<text x="54.5" y="464.5" fill="#ffff00" text-anchor="start" style="font-size:12px" >175天</text>
<text x="95" y="839" fill="#b4b4b4" text-anchor="start" style="font-size:12px"  textLength="46" lengthAdjust="spacingAndGlyphs">2017/05</text>
<text x="365" y="839" fill="#b4b4b4" text-anchor="start" style="font-size:12px"  textLength="46" lengthAdjust="spacingAndGlyphs">2017/07</text>
<text x="629" y="839" fill="#b4b4b4" text-anchor="start" style="font-size:12px"  textLength="46" lengthAdjust="spacingAndGlyphs">2017/09</text>
<text x="886" y="839" fill="#b4b4b4" text-anchor="start" style="font-size:12px"  textLength="46" lengthAdjust="spacingAndGlyphs">2017/11</text>
<text x="1080" y="839" fill="#b4b4b4" text-anchor="start" style="font-size:12px"  textLength="46" lengthAdjust="spacingAndGlyphs">2017/12</text>
</svg></body></html>
